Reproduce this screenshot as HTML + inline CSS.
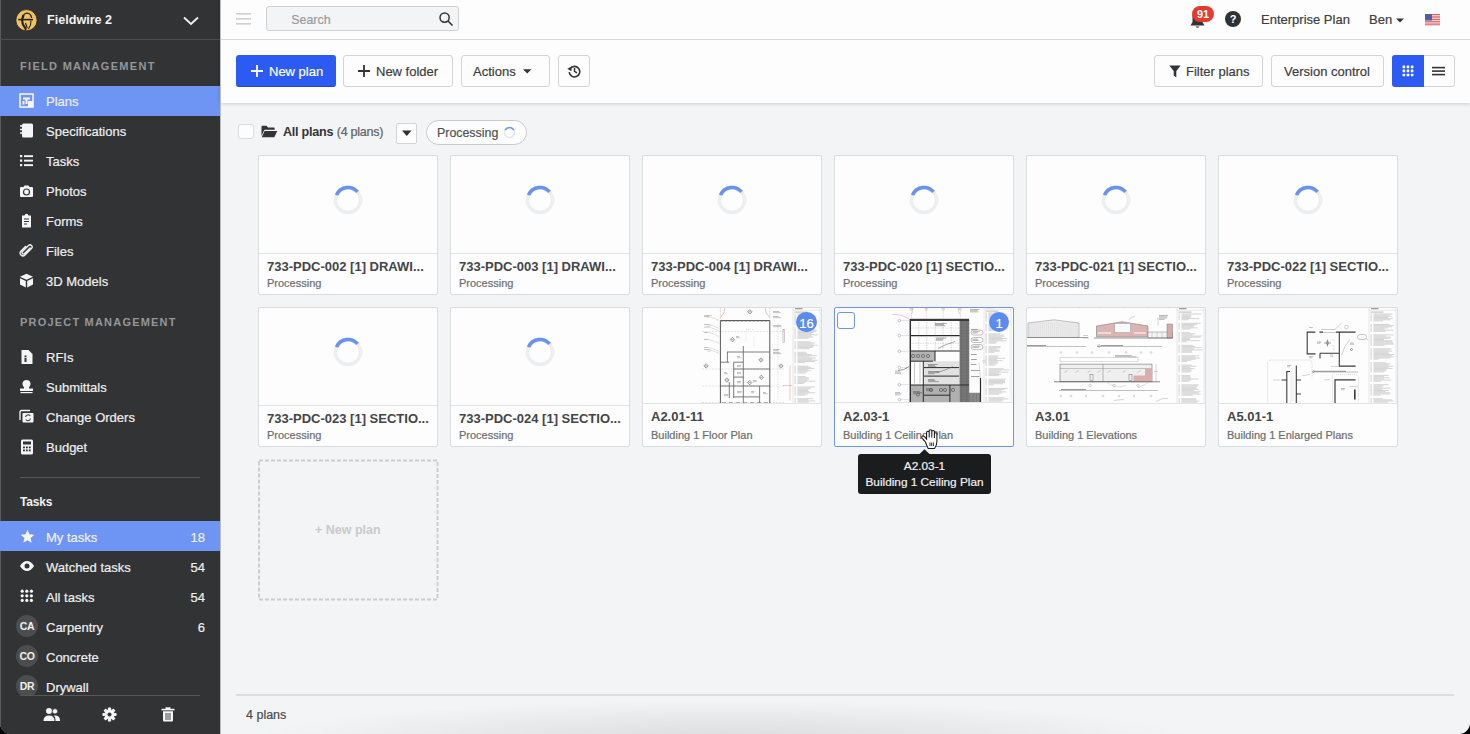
<!DOCTYPE html><html><head><meta charset="utf-8"><style>
*{box-sizing:border-box;margin:0;padding:0}
html,body{width:1470px;height:734px;overflow:hidden;background:#000}
body{font-family:"Liberation Sans",sans-serif;position:relative}
.win .a{-webkit-text-stroke:0.2px currentColor}
.win .a[style*="font-weight:bold"],.win b{-webkit-text-stroke:0}
.win{position:absolute;left:0;top:0;width:1470px;height:734px;overflow:hidden;border-radius:0 0 11px 11px;background:#f3f4f6}
.a{position:absolute;white-space:nowrap}
.sb{position:absolute;left:0;top:0;width:220px;height:734px;background:#323335}
.sbt{position:absolute;left:46px;font-size:13px;color:#ecedee;line-height:16px}
.sec{position:absolute;left:20px;font-size:11px;letter-spacing:2.05px;color:#9b9da1;font-weight:bold;line-height:14px}
.hl{position:absolute;left:0;width:220px;height:30px;background:#6e95f4}
.ic{position:absolute}
.btn{position:absolute;top:55px;height:32px;border:1px solid #d3d4d6;border-radius:3px;background:#fdfdfd}
.bt{position:absolute;font-size:13px;color:#3d3e40;line-height:16px;white-space:nowrap}
.card{position:absolute;width:180px;height:140px;background:#fdfdfd;border:1px solid #dadcdf;border-radius:2px;overflow:hidden}
.card .img{position:absolute;left:0;top:0;width:178px;height:98px;border-bottom:1px solid #e2e3e5;overflow:hidden}
.card .t{position:absolute;left:8px;top:100px;font-size:13px;font-weight:bold;color:#3a3b3d;line-height:16px;white-space:nowrap}
.card .s{position:absolute;left:8px;top:118px;font-size:11px;color:#6b6c6e;line-height:14px;white-space:nowrap}
</style></head><body><div class="win"><div class="sb"><div class="a" style="left:0;top:0;width:1px;height:734px;background:#5a5b5d"></div><svg class="a" style="left:15px;top:9px;" width="23" height="23" viewBox="0 0 23 23"><circle cx="11.5" cy="11.2" r="10.6" fill="#efc25f" stroke="#1f1d19" stroke-width="0.7"/><path d="M8 9 Q8.3 4.3 12 4.2 Q15.8 4.3 16.6 9" fill="none" stroke="#26231e" stroke-width="1.3"/><path d="M3.2 10.6 H18" stroke="#26231e" stroke-width="1.6"/><path d="M8.6 6 Q6.2 11 8 15.5 L11.2 20.8" fill="none" stroke="#26231e" stroke-width="2.2"/><path d="M16 11.5 Q16.2 16 13.5 20" fill="none" stroke="#26231e" stroke-width="1.1"/><path d="M10.5 14 L12.3 19" stroke="#26231e" stroke-width="1.2"/></svg><div class="a" style="left:47.00px;top:12.13px;font-size:12.6px;line-height:16px;font-weight:bold;color:#f2f2f3;">Fieldwire 2</div><svg class="a" style="left:183px;top:16px;" width="16" height="10" viewBox="0 0 16 10"><path d="M1 1.5 L8 8 L15 1.5" stroke="#f2f2f3" stroke-width="1.8" fill="none"/></svg><div class="a" style="left:0;top:39px;width:220px;height:1px;background:#4b4d50"></div><div class="a" style="left:20.00px;top:58.79px;font-size:11px;line-height:14px;font-weight:bold;color:#94969a;letter-spacing:1.3px;">FIELD MANAGEMENT</div><div class="hl" style="top:86px"></div><div class="a" style="left:46.00px;top:93.90px;font-size:13px;line-height:16px;font-weight:normal;color:#eeeff0;">Plans</div><div class="a" style="left:46.00px;top:123.90px;font-size:13px;line-height:16px;font-weight:normal;color:#eeeff0;">Specifications</div><div class="a" style="left:46.00px;top:153.90px;font-size:13px;line-height:16px;font-weight:normal;color:#eeeff0;">Tasks</div><div class="a" style="left:46.00px;top:183.90px;font-size:13px;line-height:16px;font-weight:normal;color:#eeeff0;">Photos</div><div class="a" style="left:46.00px;top:213.90px;font-size:13px;line-height:16px;font-weight:normal;color:#eeeff0;">Forms</div><div class="a" style="left:46.00px;top:243.90px;font-size:13px;line-height:16px;font-weight:normal;color:#eeeff0;">Files</div><div class="a" style="left:46.00px;top:273.90px;font-size:13px;line-height:16px;font-weight:normal;color:#eeeff0;">3D Models</div><div class="a" style="left:20.00px;top:314.79px;font-size:11px;line-height:14px;font-weight:bold;color:#94969a;letter-spacing:1.2px;">PROJECT MANAGEMENT</div><div class="a" style="left:46.00px;top:349.90px;font-size:13px;line-height:16px;font-weight:normal;color:#eeeff0;">RFIs</div><div class="a" style="left:46.00px;top:379.90px;font-size:13px;line-height:16px;font-weight:normal;color:#eeeff0;">Submittals</div><div class="a" style="left:46.00px;top:409.90px;font-size:13px;line-height:16px;font-weight:normal;color:#eeeff0;">Change Orders</div><div class="a" style="left:46.00px;top:439.90px;font-size:13px;line-height:16px;font-weight:normal;color:#eeeff0;">Budget</div><div class="a" style="left:20px;top:477px;width:180px;height:1px;background:#55575a"></div><div class="a" style="left:20.00px;top:495.24px;font-size:12px;line-height:15px;font-weight:bold;color:#f2f2f3;letter-spacing:-0.2px;">Tasks</div><div class="hl" style="top:521px"></div><div class="a" style="left:46.00px;top:529.70px;font-size:13px;line-height:16px;font-weight:normal;color:#eeeff0;">My tasks</div><div class="a" style="left:150px;width:55px;text-align:right;top:529.70px;font-size:13px;line-height:16px;color:#eeeff0">18</div><div class="a" style="left:46.00px;top:559.70px;font-size:13px;line-height:16px;font-weight:normal;color:#eeeff0;">Watched tasks</div><div class="a" style="left:150px;width:55px;text-align:right;top:559.70px;font-size:13px;line-height:16px;color:#eeeff0">54</div><div class="a" style="left:46.00px;top:589.70px;font-size:13px;line-height:16px;font-weight:normal;color:#eeeff0;">All tasks</div><div class="a" style="left:150px;width:55px;text-align:right;top:589.70px;font-size:13px;line-height:16px;color:#eeeff0">54</div><div class="a" style="left:46.00px;top:619.70px;font-size:13px;line-height:16px;font-weight:normal;color:#eeeff0;">Carpentry</div><div class="a" style="left:150px;width:55px;text-align:right;top:619.70px;font-size:13px;line-height:16px;color:#eeeff0">6</div><div class="a" style="left:46.00px;top:649.70px;font-size:13px;line-height:16px;font-weight:normal;color:#eeeff0;">Concrete</div><div class="a" style="left:46.00px;top:679.70px;font-size:13px;line-height:16px;font-weight:normal;color:#eeeff0;">Drywall</div><div class="a" style="left:16px;top:615px;width:22px;height:22px;border-radius:11px;background:#4b4d4f;color:#f0f0f0;font-size:10.5px;font-weight:bold;line-height:22px;text-align:center;letter-spacing:-0.3px">CA</div><div class="a" style="left:16px;top:645px;width:22px;height:22px;border-radius:11px;background:#4b4d4f;color:#f0f0f0;font-size:10.5px;font-weight:bold;line-height:22px;text-align:center;letter-spacing:-0.3px">CO</div><div class="a" style="left:16px;top:675px;width:22px;height:22px;border-radius:11px;background:#4b4d4f;color:#f0f0f0;font-size:10.5px;font-weight:bold;line-height:22px;text-align:center;letter-spacing:-0.3px">DR</div><div class="a" style="left:1px;top:696px;width:219px;height:40px;background:#323335"></div><div class="a" style="left:20px;top:695px;width:180px;height:1px;background:#55575a"></div><svg class="a" style="left:19px;top:93px;" width="15" height="15" viewBox="0 0 15 15"><rect x="1" y="1" width="13" height="13" fill="none" stroke="#f4f5f6" stroke-width="1.6"/><path d="M4 4.5 H11 V6.5 H8.5 V11 H6.5 V6.5 H4 Z" fill="#f4f5f6"/><rect x="9" y="8" width="5" height="6" fill="#f4f5f6"/><rect x="3.5" y="8" width="2" height="3.5" fill="#f4f5f6"/></svg><svg class="a" style="left:19px;top:123px;" width="15" height="15" viewBox="0 0 15 15"><rect x="3" y="0.5" width="11" height="14" rx="1.5" fill="#f4f5f6"/><path d="M1 3 H4 M1 6.5 H4 M1 10 H4" stroke="#f4f5f6" stroke-width="1.3"/></svg><svg class="a" style="left:19px;top:154px;" width="15" height="13" viewBox="0 0 15 13"><rect x="1" y="1" width="2.2" height="2.2" fill="#f4f5f6"/><rect x="1" y="5.5" width="2.2" height="2.2" fill="#f4f5f6"/><rect x="1" y="10" width="2.2" height="2.2" fill="#f4f5f6"/><rect x="5" y="1.2" width="9" height="1.9" fill="#f4f5f6"/><rect x="5" y="5.7" width="9" height="1.9" fill="#f4f5f6"/><rect x="5" y="10.2" width="9" height="1.9" fill="#f4f5f6"/></svg><svg class="a" style="left:19px;top:184px;" width="15" height="14" viewBox="0 0 15 14"><path d="M1 4 Q1 3 2 3 H4.5 L5.5 1.5 H9.5 L10.5 3 H13 Q14 3 14 4 V12 Q14 13 13 13 H2 Q1 13 1 12 Z" fill="#f4f5f6"/><circle cx="7.5" cy="8" r="3" fill="none" stroke="#323335" stroke-width="1.2"/></svg><svg class="a" style="left:19px;top:213px;" width="15" height="15" viewBox="0 0 15 15"><path d="M3 2.5 H5.5 Q6 0.8 7.5 0.8 Q9 0.8 9.5 2.5 H12 V14.5 H3 Z" fill="#f4f5f6"/><path d="M5 6 H10 M5 8.5 H10 M5 11 H8" stroke="#323335" stroke-width="1"/></svg><svg class="a" style="left:19px;top:243px;" width="15" height="15" viewBox="0 0 15 15"><path d="M11.5 4.5 L5.5 10.5 Q4.5 11.5 3.5 10.5 Q2.5 9.5 3.5 8.5 L9.5 2.5 Q11 1 12.5 2.5 Q14 4 12.5 5.5 L6 12 Q4 14 2 12 Q0 10 2 8 L7 3" fill="none" stroke="#f4f5f6" stroke-width="1.3"/></svg><svg class="a" style="left:19px;top:273px;" width="15" height="15" viewBox="0 0 15 15"><path d="M7.5 0.8 L14 3.8 L7.5 6.8 L1 3.8 Z" fill="#f4f5f6"/><path d="M1 5.2 L6.8 8 V14.5 L1 11.6 Z" fill="#f4f5f6"/><path d="M14 5.2 L8.2 8 V14.5 L14 11.6 Z" fill="#f4f5f6"/></svg><svg class="a" style="left:20px;top:349px;" width="14" height="16" viewBox="0 0 14 16"><path d="M1.5 1 H8.5 L12.5 5 V14.5 Q12.5 15 12 15 H2 Q1.5 15 1.5 14.5 Z" fill="#f4f5f6"/><rect x="4.5" y="6.5" width="2" height="1.8" fill="#323335"/><rect x="4.5" y="9" width="2" height="4" fill="#323335"/></svg><svg class="a" style="left:19px;top:379px;" width="15" height="15" viewBox="0 0 15 15"><path d="M5 8.5 Q3 6.5 3.5 4.2 Q4.2 1 7.5 1 Q10.8 1 11.5 4.2 Q12 6.5 10 8.5 V9.5 H14 V12 H1 V9.5 H5 Z" fill="#f4f5f6"/><rect x="1.5" y="13" width="12" height="1.2" fill="#f4f5f6"/></svg><svg class="a" style="left:19px;top:409px;" width="15" height="15" viewBox="0 0 15 15"><path d="M1 11 V3 Q1 1.5 2.5 1.5 H11" fill="none" stroke="#f4f5f6" stroke-width="1.3"/><rect x="3.5" y="4" width="11" height="9.5" rx="1" fill="#f4f5f6"/><path d="M6.5 8 Q7 5.8 9 5.8 Q10.5 5.8 11.2 7 M11.5 9.5 Q11 11.7 9 11.7 Q7.5 11.7 6.8 10.5" fill="none" stroke="#323335" stroke-width="1.1"/></svg><svg class="a" style="left:20px;top:439px;" width="14" height="16" viewBox="0 0 14 16"><rect x="1" y="0.5" width="12" height="15" rx="1.5" fill="#f4f5f6"/><rect x="3" y="2.5" width="8" height="3" fill="#323335"/><rect x="3.0" y="7.5" width="1.9" height="1.8" fill="#323335"/><rect x="3.0" y="10.5" width="1.9" height="1.8" fill="#323335"/><rect x="5.9" y="7.5" width="1.9" height="1.8" fill="#323335"/><rect x="5.9" y="10.5" width="1.9" height="1.8" fill="#323335"/><rect x="8.8" y="7.5" width="1.9" height="1.8" fill="#323335"/><rect x="8.8" y="10.5" width="1.9" height="1.8" fill="#323335"/></svg><svg class="a" style="left:20px;top:529px;" width="15" height="15" viewBox="0 0 15 15"><path d="M7.5 0.8 L9.4 5.3 L14.3 5.7 L10.6 8.9 L11.7 13.7 L7.5 11.2 L3.3 13.7 L4.4 8.9 L0.7 5.7 L5.6 5.3 Z" fill="#f4f5f6"/></svg><svg class="a" style="left:19px;top:560px;" width="16" height="12" viewBox="0 0 16 12"><path d="M1 6 Q4 1 8 1 Q12 1 15 6 Q12 11 8 11 Q4 11 1 6 Z" fill="#f4f5f6"/><circle cx="8" cy="6" r="2.5" fill="#323335"/></svg><svg class="a" style="left:20px;top:589px;" width="14" height="14" viewBox="0 0 14 14"><circle cx="2.2" cy="2.2" r="1.6" fill="#f4f5f6"/><circle cx="2.2" cy="6.8" r="1.6" fill="#f4f5f6"/><circle cx="2.2" cy="11.4" r="1.6" fill="#f4f5f6"/><circle cx="6.8" cy="2.2" r="1.6" fill="#f4f5f6"/><circle cx="6.8" cy="6.8" r="1.6" fill="#f4f5f6"/><circle cx="6.8" cy="11.4" r="1.6" fill="#f4f5f6"/><circle cx="11.4" cy="2.2" r="1.6" fill="#f4f5f6"/><circle cx="11.4" cy="6.8" r="1.6" fill="#f4f5f6"/><circle cx="11.4" cy="11.4" r="1.6" fill="#f4f5f6"/></svg><svg class="a" style="left:43px;top:707px;" width="18" height="15" viewBox="0 0 18 15"><circle cx="6" cy="4" r="3" fill="#f4f5f6"/><path d="M0.5 14 Q0.5 8.5 6 8.5 Q11.5 8.5 11.5 14 Z" fill="#f4f5f6"/><circle cx="12" cy="4.3" r="2.7" fill="#f4f5f6" stroke="#323335" stroke-width="0.8"/><path d="M12.5 14 V13 Q12.5 9.5 10.5 8.6 Q11.3 8.4 12 8.4 Q17 8.4 17 13.5 V14 Z" fill="#f4f5f6"/></svg><svg class="a" style="left:102px;top:707px;" width="15" height="15" viewBox="0 0 15 15"><g transform="translate(7.5 7.5)"><rect x="-1.6" y="-7" width="3.2" height="4" rx="0.6" fill="#f4f5f6" transform="rotate(0)"/><rect x="-1.6" y="-7" width="3.2" height="4" rx="0.6" fill="#f4f5f6" transform="rotate(45)"/><rect x="-1.6" y="-7" width="3.2" height="4" rx="0.6" fill="#f4f5f6" transform="rotate(90)"/><rect x="-1.6" y="-7" width="3.2" height="4" rx="0.6" fill="#f4f5f6" transform="rotate(135)"/><rect x="-1.6" y="-7" width="3.2" height="4" rx="0.6" fill="#f4f5f6" transform="rotate(180)"/><rect x="-1.6" y="-7" width="3.2" height="4" rx="0.6" fill="#f4f5f6" transform="rotate(225)"/><rect x="-1.6" y="-7" width="3.2" height="4" rx="0.6" fill="#f4f5f6" transform="rotate(270)"/><rect x="-1.6" y="-7" width="3.2" height="4" rx="0.6" fill="#f4f5f6" transform="rotate(315)"/><circle r="5" fill="#f4f5f6"/><circle r="2" fill="#323335"/></g></svg><svg class="a" style="left:161px;top:707px;" width="14" height="15" viewBox="0 0 14 15"><rect x="0.5" y="1.8" width="13" height="1.6" fill="#f4f5f6"/><rect x="4.5" y="0.3" width="5" height="2" fill="#f4f5f6"/><path d="M2 4.3 H12 V13.5 Q12 14.5 11 14.5 H3 Q2 14.5 2 13.5 Z" fill="#f4f5f6"/><path d="M5 6 V13 M7 6 V13 M9 6 V13" stroke="#323335" stroke-width="0.9"/></svg></div><div class="a" style="left:220px;top:0;width:1250px;height:103px;background:#fdfdfd;box-shadow:0 1px 4px rgba(0,0,0,0.16)"></div><div class="a" style="left:220px;top:0;width:1px;height:734px;background:#bdbec0"></div><div class="a" style="left:221px;top:39px;width:1249px;height:1px;background:#d6d7d9"></div><svg class="a" style="left:236px;top:12px;" width="15" height="13" viewBox="0 0 15 13"><rect x="0" y="1" width="15" height="1.6" fill="#cfd0d2"/><rect x="0" y="6" width="15" height="1.6" fill="#cfd0d2"/><rect x="0" y="11" width="15" height="1.6" fill="#cfd0d2"/></svg><div class="a" style="left:266px;top:6px;width:193px;height:25px;background:#f3f4f6;border:1px solid #cfd0d2;border-radius:3px"></div><div class="a" style="left:291.30px;top:11.90px;font-size:12.4px;line-height:16px;font-weight:normal;color:#9a9b9d;">Search</div><svg class="a" style="left:438px;top:11px;" width="16" height="16" viewBox="0 0 16 16"><circle cx="6.6" cy="6.6" r="4.6" fill="none" stroke="#333436" stroke-width="1.5"/><path d="M10 10 L14.5 14.5" stroke="#333436" stroke-width="1.6"/></svg><svg class="a" style="left:1189px;top:8px;" width="17" height="22" viewBox="0 0 17 22"><path d="M8.5 3 Q3.5 3 3.5 9 V14 L1.5 17.5 H15.5 L13.5 14 V9 Q13.5 3 8.5 3 Z" fill="#333436"/><path d="M6.5 18.5 Q8.5 21 10.5 18.5 Z" fill="#333436"/></svg><div class="a" style="left:1192px;top:5.5px;width:22px;height:16px;border-radius:8px;background:#e53a2f;color:#fff;font-size:11px;font-weight:bold;line-height:16px;text-align:center">91</div><div class="a" style="left:1225px;top:11px;width:16px;height:16px;border-radius:8px;background:#2f3133;color:#fff;font-size:11px;font-weight:bold;line-height:16px;text-align:center">?</div><div class="a" style="left:1261.00px;top:12.40px;font-size:13px;line-height:16px;font-weight:normal;color:#3d3e40;">Enterprise Plan</div><div class="a" style="left:1369.00px;top:12.00px;font-size:13px;line-height:16px;font-weight:normal;color:#3d3e40;">Ben</div><svg class="a" style="left:1396px;top:18px;" width="8" height="5" viewBox="0 0 8 5"><path d="M0 0.5 H8 L4 4.5 Z" fill="#333436"/></svg><svg class="a" style="left:1425px;top:14px;" width="15" height="12" viewBox="0 0 15 12"><rect x="0" y="0" width="15" height="12" fill="#f5f5f5"/><rect x="0" y="0.00" width="15" height="0.9" fill="#d9524f"/><rect x="0" y="1.72" width="15" height="0.9" fill="#d9524f"/><rect x="0" y="3.44" width="15" height="0.9" fill="#d9524f"/><rect x="0" y="5.16" width="15" height="0.9" fill="#d9524f"/><rect x="0" y="6.88" width="15" height="0.9" fill="#d9524f"/><rect x="0" y="8.60" width="15" height="0.9" fill="#d9524f"/><rect x="0" y="10.32" width="15" height="0.9" fill="#d9524f"/><rect x="0" y="0" width="7" height="6.5" fill="#4a5fa8"/></svg><div class="a" style="left:236px;top:55px;width:100px;height:32px;background:#2c5bf4;border-radius:3px;border-bottom:1px solid #2a48b0"></div><svg class="a" style="left:251px;top:65px;" width="12" height="12" viewBox="0 0 12 12"><path d="M6 0 V12 M0 6 H12" stroke="#fff" stroke-width="1.8"/></svg><div class="a" style="left:269.00px;top:63.50px;font-size:13px;line-height:16px;font-weight:normal;color:#ffffff;">New plan</div><div class="btn" style="left:343px;width:110px"></div><svg class="a" style="left:358px;top:65px;" width="12" height="12" viewBox="0 0 12 12"><path d="M6 0 V12 M0 6 H12" stroke="#333436" stroke-width="1.8"/></svg><div class="a" style="left:376.00px;top:63.50px;font-size:13px;line-height:16px;font-weight:normal;color:#3d3e40;">New folder</div><div class="btn" style="left:461px;width:89px"></div><div class="a" style="left:473.00px;top:63.50px;font-size:13px;line-height:16px;font-weight:normal;color:#3d3e40;">Actions</div><svg class="a" style="left:523px;top:69px;" width="9" height="5" viewBox="0 0 9 5"><path d="M0 0.3 H8.5 L4.25 4.5 Z" fill="#333436"/></svg><div class="btn" style="left:558px;width:32px"></div><svg class="a" style="left:567px;top:64px;" width="14" height="14" viewBox="0 0 14 14"><path d="M3.2 4.5 A5.3 5.3 0 1 1 2.2 8.2" fill="none" stroke="#333436" stroke-width="1.6"/><path d="M0.3 4.8 L4.6 2.6 L4.5 7.2 Z" fill="#333436"/><path d="M7.5 4 V7.3 L10 9" fill="none" stroke="#333436" stroke-width="1.5"/></svg><div class="btn" style="left:1154px;width:109px"></div><svg class="a" style="left:1169px;top:65px;" width="12" height="13" viewBox="0 0 12 13"><path d="M0.3 0.5 H11.7 L7.3 6 V12.5 L4.7 10.5 V6 Z" fill="#333436"/></svg><div class="a" style="left:1186.00px;top:63.50px;font-size:13px;line-height:16px;font-weight:normal;color:#3d3e40;">Filter plans</div><div class="btn" style="left:1271px;width:113px"></div><div class="a" style="left:1284.00px;top:63.50px;font-size:13px;line-height:16px;font-weight:normal;color:#3d3e40;">Version control</div><div class="btn" style="left:1392px;width:63px"></div><div class="a" style="left:1392px;top:55px;width:32px;height:32px;background:#2c5bf4;border-radius:3px 0 0 3px"></div><svg class="a" style="left:1402px;top:65px;" width="12" height="12" viewBox="0 0 12 12"><rect x="0.6" y="0.6" width="2.6" height="2.6" rx="0.5" fill="#fff"/><rect x="0.6" y="4.6" width="2.6" height="2.6" rx="0.5" fill="#fff"/><rect x="0.6" y="8.7" width="2.6" height="2.6" rx="0.5" fill="#fff"/><rect x="4.7" y="0.6" width="2.6" height="2.6" rx="0.5" fill="#fff"/><rect x="4.7" y="4.6" width="2.6" height="2.6" rx="0.5" fill="#fff"/><rect x="4.7" y="8.7" width="2.6" height="2.6" rx="0.5" fill="#fff"/><rect x="8.8" y="0.6" width="2.6" height="2.6" rx="0.5" fill="#fff"/><rect x="8.8" y="4.6" width="2.6" height="2.6" rx="0.5" fill="#fff"/><rect x="8.8" y="8.7" width="2.6" height="2.6" rx="0.5" fill="#fff"/></svg><svg class="a" style="left:1432px;top:66px;" width="14" height="10" viewBox="0 0 14 10"><rect x="0" y="0.8" width="13" height="1.6" fill="#333436"/><rect x="0" y="4.3" width="13" height="1.6" fill="#333436"/><rect x="0" y="7.8" width="13" height="1.6" fill="#333436"/></svg><div class="a" style="left:238px;top:124px;width:16px;height:15px;background:#fdfdfd;border:1px solid #dcdde0;border-radius:3px"></div><svg class="a" style="left:261px;top:125px;" width="17" height="13" viewBox="0 0 17 13"><path d="M0.5 1.5 Q0.5 0.8 1.2 0.8 H5.5 L7 2.5 H13 Q13.7 2.5 13.7 3.2 V4.8 H4 Q3.3 4.8 3 5.5 L0.5 11 Z" fill="#333436"/><path d="M3.6 6 H16.3 L13.3 12.2 H0.8 Z" fill="#333436"/></svg><div class="a" style="left:283.00px;top:124.43px;font-size:12.6px;line-height:16px;font-weight:normal;color:#333436;"><b style="letter-spacing:-0.25px">All plans</b> <span style="color:#616264;letter-spacing:-0.3px">(4 plans)</span></div><div class="a" style="left:396px;top:122.5px;width:21px;height:21px;background:#fdfdfd;border:1px solid #d3d4d6;border-radius:2px"></div><svg class="a" style="left:402px;top:130px;" width="10" height="7" viewBox="0 0 10 7"><path d="M0 0.5 H9.5 L4.75 6 Z" fill="#2f3033"/></svg><div class="a" style="left:426px;top:120px;width:101px;height:24.5px;background:#fdfdfd;border:1px solid #c9cacc;border-radius:13px"></div><div class="a" style="left:437.00px;top:124.60px;font-size:12.4px;line-height:16px;font-weight:normal;color:#505153;">Processing</div><svg class="a" style="left:503px;top:126px;" width="13" height="13" viewBox="0 0 13 13"><circle cx="6.5" cy="6.5" r="5" fill="none" stroke="#e6e7e9" stroke-width="1.6"/><path d="M2.2 4 A5 5 0 0 1 10.8 4" fill="none" stroke="#6d94f1" stroke-width="1.6"/></svg><div class="card" style="left:258px;top:155px"><div class="img"></div></div><svg class="a" style="left:333px;top:185px;" width="30" height="30" viewBox="0 0 30 30"><circle cx="15" cy="15" r="12.5" fill="none" stroke="#edeef0" stroke-width="3.6"/><path d="M3.49 10.12 A12.5 12.5 0 0 1 24.58 6.96" fill="none" stroke="#6a93f0" stroke-width="3.6"/></svg><div class="a" style="left:267.00px;top:258.70px;font-size:13px;line-height:16px;font-weight:bold;color:#444547;">733-PDC-002 [1] DRAWI...</div><div class="a" style="left:267.00px;top:275.69px;font-size:11px;line-height:14px;font-weight:normal;color:#6b6c6e;">Processing</div><div class="card" style="left:450px;top:155px"><div class="img"></div></div><svg class="a" style="left:525px;top:185px;" width="30" height="30" viewBox="0 0 30 30"><circle cx="15" cy="15" r="12.5" fill="none" stroke="#edeef0" stroke-width="3.6"/><path d="M3.49 10.12 A12.5 12.5 0 0 1 24.58 6.96" fill="none" stroke="#6a93f0" stroke-width="3.6"/></svg><div class="a" style="left:459.00px;top:258.70px;font-size:13px;line-height:16px;font-weight:bold;color:#444547;">733-PDC-003 [1] DRAWI...</div><div class="a" style="left:459.00px;top:275.69px;font-size:11px;line-height:14px;font-weight:normal;color:#6b6c6e;">Processing</div><div class="card" style="left:642px;top:155px"><div class="img"></div></div><svg class="a" style="left:717px;top:185px;" width="30" height="30" viewBox="0 0 30 30"><circle cx="15" cy="15" r="12.5" fill="none" stroke="#edeef0" stroke-width="3.6"/><path d="M3.49 10.12 A12.5 12.5 0 0 1 24.58 6.96" fill="none" stroke="#6a93f0" stroke-width="3.6"/></svg><div class="a" style="left:651.00px;top:258.70px;font-size:13px;line-height:16px;font-weight:bold;color:#444547;">733-PDC-004 [1] DRAWI...</div><div class="a" style="left:651.00px;top:275.69px;font-size:11px;line-height:14px;font-weight:normal;color:#6b6c6e;">Processing</div><div class="card" style="left:834px;top:155px"><div class="img"></div></div><svg class="a" style="left:909px;top:185px;" width="30" height="30" viewBox="0 0 30 30"><circle cx="15" cy="15" r="12.5" fill="none" stroke="#edeef0" stroke-width="3.6"/><path d="M3.49 10.12 A12.5 12.5 0 0 1 24.58 6.96" fill="none" stroke="#6a93f0" stroke-width="3.6"/></svg><div class="a" style="left:843.00px;top:258.70px;font-size:13px;line-height:16px;font-weight:bold;color:#444547;">733-PDC-020 [1] SECTIO...</div><div class="a" style="left:843.00px;top:275.69px;font-size:11px;line-height:14px;font-weight:normal;color:#6b6c6e;">Processing</div><div class="card" style="left:1026px;top:155px"><div class="img"></div></div><svg class="a" style="left:1101px;top:185px;" width="30" height="30" viewBox="0 0 30 30"><circle cx="15" cy="15" r="12.5" fill="none" stroke="#edeef0" stroke-width="3.6"/><path d="M3.49 10.12 A12.5 12.5 0 0 1 24.58 6.96" fill="none" stroke="#6a93f0" stroke-width="3.6"/></svg><div class="a" style="left:1035.00px;top:258.70px;font-size:13px;line-height:16px;font-weight:bold;color:#444547;">733-PDC-021 [1] SECTIO...</div><div class="a" style="left:1035.00px;top:275.69px;font-size:11px;line-height:14px;font-weight:normal;color:#6b6c6e;">Processing</div><div class="card" style="left:1218px;top:155px"><div class="img"></div></div><svg class="a" style="left:1293px;top:185px;" width="30" height="30" viewBox="0 0 30 30"><circle cx="15" cy="15" r="12.5" fill="none" stroke="#edeef0" stroke-width="3.6"/><path d="M3.49 10.12 A12.5 12.5 0 0 1 24.58 6.96" fill="none" stroke="#6a93f0" stroke-width="3.6"/></svg><div class="a" style="left:1227.00px;top:258.70px;font-size:13px;line-height:16px;font-weight:bold;color:#444547;">733-PDC-022 [1] SECTIO...</div><div class="a" style="left:1227.00px;top:275.69px;font-size:11px;line-height:14px;font-weight:normal;color:#6b6c6e;">Processing</div><div class="card" style="left:258px;top:307px;"><div class="img" style="height:98px;"></div></div><svg class="a" style="left:333px;top:337px;" width="30" height="30" viewBox="0 0 30 30"><circle cx="15" cy="15" r="12.5" fill="none" stroke="#edeef0" stroke-width="3.6"/><path d="M3.49 10.12 A12.5 12.5 0 0 1 24.58 6.96" fill="none" stroke="#6a93f0" stroke-width="3.6"/></svg><div class="a" style="left:267.00px;top:410.80px;font-size:13px;line-height:16px;font-weight:bold;color:#444547;">733-PDC-023 [1] SECTIO...</div><div class="a" style="left:267.00px;top:427.59px;font-size:11px;line-height:14px;font-weight:normal;color:#6b6c6e;">Processing</div><div class="card" style="left:450px;top:307px;"><div class="img" style="height:98px;"></div></div><svg class="a" style="left:525px;top:337px;" width="30" height="30" viewBox="0 0 30 30"><circle cx="15" cy="15" r="12.5" fill="none" stroke="#edeef0" stroke-width="3.6"/><path d="M3.49 10.12 A12.5 12.5 0 0 1 24.58 6.96" fill="none" stroke="#6a93f0" stroke-width="3.6"/></svg><div class="a" style="left:459.00px;top:410.80px;font-size:13px;line-height:16px;font-weight:bold;color:#444547;">733-PDC-024 [1] SECTIO...</div><div class="a" style="left:459.00px;top:427.59px;font-size:11px;line-height:14px;font-weight:normal;color:#6b6c6e;">Processing</div><div class="card" style="left:642px;top:307px;"><div class="img" style="height:96px;"><svg width="178" height="96" viewBox="0 0 178 96" style="position:absolute;left:0;top:0"><g transform="translate(-1 -2.5)"><line x1="78.4" y1="2" x2="78.4" y2="14" stroke="#d88" stroke-width="0.4" stroke-dasharray="2 1"/><line x1="127.8" y1="2" x2="127.8" y2="14" stroke="#d88" stroke-width="0.4" stroke-dasharray="2 1"/><line x1="60" y1="26" x2="142" y2="26" stroke="#b8b8c0" stroke-width="0.35" stroke-dasharray="2 1.2"/><line x1="60" y1="63.5" x2="142" y2="63.5" stroke="#b8b8c0" stroke-width="0.35" stroke-dasharray="2 1.2"/><line x1="60" y1="80.5" x2="142" y2="80.5" stroke="#b8b8c0" stroke-width="0.35" stroke-dasharray="2 1.2"/><line x1="60" y1="97" x2="142" y2="97" stroke="#b8b8c0" stroke-width="0.35" stroke-dasharray="2 1.2"/><path d="M83 2 Q83 8 78.4 12 M123 2 Q123 8 127.8 12" fill="none" stroke="#999" stroke-width="0.5"/><path d="M78.4 98 V15 H127.8 V98" fill="none" stroke="#585858" stroke-width="1.0"/><line x1="78.4" y1="15.6" x2="127.8" y2="15.6" stroke="#777" stroke-width="0.8" stroke-dasharray="3 1"/><path d="M85 46.5 H127.8 M85.4 46.5 V56.7 M101.3 40.5 V98 M78.4 56.7 H87.3 M91.7 56.7 H101.3 M91.7 56.7 V92.5 M87.3 76.5 V92.5 M91.7 63.5 H127.8 M91.7 71.6 H101.3 M78.4 80.5 H127.8 M91.7 91.4 H117.6 M117.6 80.5 V98" fill="none" stroke="#5e5e5e" stroke-width="0.8"/><path d="M80 97.5 H127" stroke="#666" stroke-width="0.9" stroke-dasharray="4 3"/><path d="M104 36 V24 H112 M112 40 V30" fill="none" stroke="#bbb" stroke-width="0.4" stroke-dasharray="1 1"/><path d="M90.4 31.900000000000002 L92.60000000000001 34.1 L90.4 36.300000000000004 L88.2 34.1 Z" fill="none" stroke="#555" stroke-width="0.6"/><line x1="89.2" y1="34.1" x2="91.60000000000001" y2="34.1" stroke="#555" stroke-width="0.5"/><path d="M107.8 4.1 L110.0 6.3 L107.8 8.5 L105.6 6.3 Z" fill="none" stroke="#555" stroke-width="0.6"/><line x1="106.6" y1="6.3" x2="109.0" y2="6.3" stroke="#555" stroke-width="0.5"/><path d="M64.1 58.199999999999996 L66.3 60.4 L64.1 62.6 L61.89999999999999 60.4 Z" fill="none" stroke="#555" stroke-width="0.6"/><line x1="62.89999999999999" y1="60.4" x2="65.3" y2="60.4" stroke="#555" stroke-width="0.5"/><path d="M84.9 72.3 L87.10000000000001 74.5 L84.9 76.7 L82.7 74.5 Z" fill="none" stroke="#555" stroke-width="0.6"/><line x1="83.7" y1="74.5" x2="86.10000000000001" y2="74.5" stroke="#555" stroke-width="0.5"/><path d="M107.7 74.89999999999999 L109.9 77.1 L107.7 79.3 L105.5 77.1 Z" fill="none" stroke="#555" stroke-width="0.6"/><line x1="106.5" y1="77.1" x2="108.9" y2="77.1" stroke="#555" stroke-width="0.5"/><path d="M119.3 69.7 L121.5 71.9 L119.3 74.10000000000001 L117.1 71.9 Z" fill="none" stroke="#555" stroke-width="0.6"/><line x1="118.1" y1="71.9" x2="120.5" y2="71.9" stroke="#555" stroke-width="0.5"/><path d="M119 52.3 L121.2 54.5 L119 56.7 L116.8 54.5 Z" fill="none" stroke="#555" stroke-width="0.6"/><line x1="117.8" y1="54.5" x2="120.2" y2="54.5" stroke="#555" stroke-width="0.5"/><path d="M139 58.3 L141.2 60.5 L139 62.7 L136.8 60.5 Z" fill="none" stroke="#555" stroke-width="0.6"/><line x1="137.8" y1="60.5" x2="140.2" y2="60.5" stroke="#555" stroke-width="0.5"/><line x1="94" y1="31.00" x2="96.87" y2="31.00" stroke="#888" stroke-width="0.5"/><line x1="94" y1="32.20" x2="98.04" y2="32.20" stroke="#888" stroke-width="0.5"/><line x1="95" y1="51.00" x2="97.92" y2="51.00" stroke="#888" stroke-width="0.5"/><line x1="95" y1="52.20" x2="99.28" y2="52.20" stroke="#888" stroke-width="0.5"/><line x1="95" y1="60.00" x2="99.02" y2="60.00" stroke="#888" stroke-width="0.5"/><line x1="95" y1="61.20" x2="98.46" y2="61.20" stroke="#888" stroke-width="0.5"/><line x1="95" y1="67.00" x2="99.04" y2="67.00" stroke="#888" stroke-width="0.5"/><line x1="95" y1="68.20" x2="98.92" y2="68.20" stroke="#888" stroke-width="0.5"/><line x1="82" y1="67.00" x2="84.61" y2="67.00" stroke="#888" stroke-width="0.5"/><line x1="82" y1="68.20" x2="85.83" y2="68.20" stroke="#888" stroke-width="0.5"/><line x1="95" y1="76.00" x2="99.05" y2="76.00" stroke="#888" stroke-width="0.5"/><line x1="95" y1="77.20" x2="98.80" y2="77.20" stroke="#888" stroke-width="0.5"/><line x1="95" y1="86.00" x2="99.70" y2="86.00" stroke="#888" stroke-width="0.5"/><line x1="95" y1="87.20" x2="99.34" y2="87.20" stroke="#888" stroke-width="0.5"/><line x1="109" y1="86.00" x2="112.44" y2="86.00" stroke="#888" stroke-width="0.5"/><line x1="109" y1="87.20" x2="112.07" y2="87.20" stroke="#888" stroke-width="0.5"/><line x1="121" y1="87.00" x2="123.82" y2="87.00" stroke="#888" stroke-width="0.5"/><line x1="121" y1="88.20" x2="125.53" y2="88.20" stroke="#888" stroke-width="0.5"/><line x1="82" y1="89.00" x2="86.22" y2="89.00" stroke="#888" stroke-width="0.5"/><line x1="82" y1="90.20" x2="86.02" y2="90.20" stroke="#888" stroke-width="0.5"/><line x1="111" y1="75.00" x2="114.60" y2="75.00" stroke="#888" stroke-width="0.5"/><line x1="111" y1="76.20" x2="114.75" y2="76.20" stroke="#888" stroke-width="0.5"/><line x1="62" y1="11" x2="66" y2="11" stroke="#888" stroke-width="0.5"/><path d="M66 11 Q72 12 77 15" fill="none" stroke="#aaa" stroke-width="0.35"/><line x1="62" y1="19" x2="66" y2="19" stroke="#888" stroke-width="0.5"/><path d="M66 19 Q72 20 77 23" fill="none" stroke="#aaa" stroke-width="0.35"/><line x1="62" y1="21.5" x2="66" y2="21.5" stroke="#888" stroke-width="0.5"/><path d="M66 21.5 Q72 22.5 77 25.5" fill="none" stroke="#aaa" stroke-width="0.35"/><line x1="62" y1="27" x2="66" y2="27" stroke="#888" stroke-width="0.5"/><path d="M66 27 Q72 28 77 31" fill="none" stroke="#aaa" stroke-width="0.35"/><line x1="62" y1="34" x2="66" y2="34" stroke="#888" stroke-width="0.5"/><path d="M66 34 Q72 35 77 38" fill="none" stroke="#aaa" stroke-width="0.35"/><line x1="62" y1="42" x2="66" y2="42" stroke="#888" stroke-width="0.5"/><path d="M66 42 Q72 43 77 46" fill="none" stroke="#aaa" stroke-width="0.35"/><line x1="62" y1="44" x2="66" y2="44" stroke="#888" stroke-width="0.5"/><path d="M66 44 Q72 45 77 48" fill="none" stroke="#aaa" stroke-width="0.35"/><line x1="62" y1="10" x2="70" y2="10" stroke="#d88" stroke-width="0.5"/><circle cx="66" cy="11" r="1.2" fill="none" stroke="#aaa" stroke-width="0.4"/><circle cx="67" cy="20" r="1.2" fill="none" stroke="#aaa" stroke-width="0.4"/><circle cx="67" cy="45" r="1.2" fill="none" stroke="#aaa" stroke-width="0.4"/><line x1="136" y1="18" x2="136" y2="95" stroke="#bbb" stroke-width="0.4" stroke-dasharray="1.5 1"/><path d="M148 60 V95 M141 80 H150" fill="none" stroke="#d88" stroke-width="0.45"/><rect x="141" y="24" width="1.5" height="13" fill="none" stroke="#999" stroke-width="0.5"/><line x1="131" y1="6.00" x2="137.11" y2="6.00" stroke="#888" stroke-width="0.5"/><line x1="131" y1="7.20" x2="138.65" y2="7.20" stroke="#888" stroke-width="0.5"/><line x1="131" y1="11.00" x2="136.73" y2="11.00" stroke="#888" stroke-width="0.5"/><line x1="131" y1="12.20" x2="139.11" y2="12.20" stroke="#888" stroke-width="0.5"/><line x1="131" y1="20.00" x2="139.15" y2="20.00" stroke="#888" stroke-width="0.5"/><line x1="131" y1="21.20" x2="139.35" y2="21.20" stroke="#888" stroke-width="0.5"/><line x1="131" y1="44.00" x2="137.23" y2="44.00" stroke="#888" stroke-width="0.5"/><line x1="131" y1="45.20" x2="136.46" y2="45.20" stroke="#888" stroke-width="0.5"/><line x1="131" y1="47.00" x2="137.66" y2="47.00" stroke="#888" stroke-width="0.5"/><line x1="131" y1="48.20" x2="139.44" y2="48.20" stroke="#888" stroke-width="0.5"/><line x1="151.0" y1="0" x2="151.0" y2="98" stroke="#d0d0d0" stroke-width="0.5"/><line x1="178.0" y1="0" x2="178.0" y2="98" stroke="#d0d0d0" stroke-width="0.5"/><line x1="153.0" y1="3.2" x2="160.5" y2="3.2" stroke="#666" stroke-width="0.8"/><line x1="151.0" y1="4.8" x2="178.0" y2="4.8" stroke="#ccc" stroke-width="0.4"/><line x1="152.5" y1="6.6" x2="165.5" y2="6.6" stroke="#888" stroke-width="0.55"/><line x1="152.5" y1="8.50" x2="153.8" y2="8.50" stroke="#a4a4a4" stroke-width="0.45"/><line x1="155.5" y1="8.50" x2="169.06" y2="8.50" stroke="#a4a4a4" stroke-width="0.45"/><line x1="152.5" y1="9.65" x2="153.8" y2="9.65" stroke="#a4a4a4" stroke-width="0.45"/><line x1="155.5" y1="9.65" x2="171.34" y2="9.65" stroke="#a4a4a4" stroke-width="0.45"/><line x1="152.5" y1="10.80" x2="153.8" y2="10.80" stroke="#a4a4a4" stroke-width="0.45"/><line x1="155.5" y1="10.80" x2="174.42" y2="10.80" stroke="#a4a4a4" stroke-width="0.45"/><line x1="152.5" y1="11.95" x2="153.8" y2="11.95" stroke="#a4a4a4" stroke-width="0.45"/><line x1="155.5" y1="11.95" x2="165.23" y2="11.95" stroke="#a4a4a4" stroke-width="0.45"/><line x1="152.5" y1="13.10" x2="153.8" y2="13.10" stroke="#a4a4a4" stroke-width="0.45"/><line x1="155.5" y1="13.10" x2="173.96" y2="13.10" stroke="#a4a4a4" stroke-width="0.45"/><line x1="152.5" y1="14.25" x2="153.8" y2="14.25" stroke="#a4a4a4" stroke-width="0.45"/><line x1="155.5" y1="14.25" x2="168.22" y2="14.25" stroke="#a4a4a4" stroke-width="0.45"/><line x1="152.5" y1="15.40" x2="153.8" y2="15.40" stroke="#a4a4a4" stroke-width="0.45"/><line x1="155.5" y1="15.40" x2="164.43" y2="15.40" stroke="#a4a4a4" stroke-width="0.45"/><line x1="152.5" y1="16.55" x2="153.8" y2="16.55" stroke="#a4a4a4" stroke-width="0.45"/><line x1="155.5" y1="16.55" x2="166.58" y2="16.55" stroke="#a4a4a4" stroke-width="0.45"/><line x1="152.5" y1="17.70" x2="153.8" y2="17.70" stroke="#a4a4a4" stroke-width="0.45"/><line x1="155.5" y1="17.70" x2="167.33" y2="17.70" stroke="#a4a4a4" stroke-width="0.45"/><line x1="152.5" y1="18.85" x2="153.8" y2="18.85" stroke="#a4a4a4" stroke-width="0.45"/><line x1="155.5" y1="18.85" x2="160.52" y2="18.85" stroke="#a4a4a4" stroke-width="0.45"/><line x1="152.5" y1="22.40" x2="153.8" y2="22.40" stroke="#a4a4a4" stroke-width="0.45"/><line x1="155.5" y1="22.40" x2="169.23" y2="22.40" stroke="#a4a4a4" stroke-width="0.45"/><line x1="152.5" y1="23.55" x2="153.8" y2="23.55" stroke="#a4a4a4" stroke-width="0.45"/><line x1="155.5" y1="23.55" x2="172.19" y2="23.55" stroke="#a4a4a4" stroke-width="0.45"/><line x1="152.5" y1="24.70" x2="153.8" y2="24.70" stroke="#a4a4a4" stroke-width="0.45"/><line x1="155.5" y1="24.70" x2="175.05" y2="24.70" stroke="#a4a4a4" stroke-width="0.45"/><line x1="152.5" y1="25.85" x2="153.8" y2="25.85" stroke="#a4a4a4" stroke-width="0.45"/><line x1="155.5" y1="25.85" x2="174.23" y2="25.85" stroke="#a4a4a4" stroke-width="0.45"/><line x1="152.5" y1="27.00" x2="153.8" y2="27.00" stroke="#a4a4a4" stroke-width="0.45"/><line x1="155.5" y1="27.00" x2="171.81" y2="27.00" stroke="#a4a4a4" stroke-width="0.45"/><line x1="152.5" y1="28.15" x2="153.8" y2="28.15" stroke="#a4a4a4" stroke-width="0.45"/><line x1="155.5" y1="28.15" x2="169.61" y2="28.15" stroke="#a4a4a4" stroke-width="0.45"/><line x1="152.5" y1="29.30" x2="153.8" y2="29.30" stroke="#a4a4a4" stroke-width="0.45"/><line x1="155.5" y1="29.30" x2="175.82" y2="29.30" stroke="#a4a4a4" stroke-width="0.45"/><line x1="152.5" y1="30.45" x2="153.8" y2="30.45" stroke="#a4a4a4" stroke-width="0.45"/><line x1="155.5" y1="30.45" x2="169.31" y2="30.45" stroke="#a4a4a4" stroke-width="0.45"/><line x1="152.5" y1="31.60" x2="153.8" y2="31.60" stroke="#a4a4a4" stroke-width="0.45"/><line x1="155.5" y1="31.60" x2="171.63" y2="31.60" stroke="#a4a4a4" stroke-width="0.45"/><line x1="152.5" y1="32.75" x2="153.8" y2="32.75" stroke="#a4a4a4" stroke-width="0.45"/><line x1="155.5" y1="32.75" x2="166.45" y2="32.75" stroke="#a4a4a4" stroke-width="0.45"/><line x1="152.5" y1="36.30" x2="153.8" y2="36.30" stroke="#a4a4a4" stroke-width="0.45"/><line x1="155.5" y1="36.30" x2="168.58" y2="36.30" stroke="#a4a4a4" stroke-width="0.45"/><line x1="152.5" y1="37.45" x2="153.8" y2="37.45" stroke="#a4a4a4" stroke-width="0.45"/><line x1="155.5" y1="37.45" x2="173.16" y2="37.45" stroke="#a4a4a4" stroke-width="0.45"/><line x1="152.5" y1="38.60" x2="153.8" y2="38.60" stroke="#a4a4a4" stroke-width="0.45"/><line x1="155.5" y1="38.60" x2="171.30" y2="38.60" stroke="#a4a4a4" stroke-width="0.45"/><line x1="152.5" y1="39.75" x2="153.8" y2="39.75" stroke="#a4a4a4" stroke-width="0.45"/><line x1="155.5" y1="39.75" x2="175.39" y2="39.75" stroke="#a4a4a4" stroke-width="0.45"/><line x1="152.5" y1="40.90" x2="153.8" y2="40.90" stroke="#a4a4a4" stroke-width="0.45"/><line x1="155.5" y1="40.90" x2="171.60" y2="40.90" stroke="#a4a4a4" stroke-width="0.45"/><line x1="152.5" y1="42.05" x2="153.8" y2="42.05" stroke="#a4a4a4" stroke-width="0.45"/><line x1="155.5" y1="42.05" x2="170.44" y2="42.05" stroke="#a4a4a4" stroke-width="0.45"/><line x1="152.5" y1="43.20" x2="153.8" y2="43.20" stroke="#a4a4a4" stroke-width="0.45"/><line x1="155.5" y1="43.20" x2="167.29" y2="43.20" stroke="#a4a4a4" stroke-width="0.45"/><line x1="152.5" y1="46.75" x2="153.8" y2="46.75" stroke="#a4a4a4" stroke-width="0.45"/><line x1="155.5" y1="46.75" x2="164.13" y2="46.75" stroke="#a4a4a4" stroke-width="0.45"/><line x1="152.5" y1="47.90" x2="153.8" y2="47.90" stroke="#a4a4a4" stroke-width="0.45"/><line x1="155.5" y1="47.90" x2="165.05" y2="47.90" stroke="#a4a4a4" stroke-width="0.45"/><line x1="152.5" y1="49.05" x2="153.8" y2="49.05" stroke="#a4a4a4" stroke-width="0.45"/><line x1="155.5" y1="49.05" x2="169.66" y2="49.05" stroke="#a4a4a4" stroke-width="0.45"/><line x1="152.5" y1="50.20" x2="153.8" y2="50.20" stroke="#a4a4a4" stroke-width="0.45"/><line x1="155.5" y1="50.20" x2="174.87" y2="50.20" stroke="#a4a4a4" stroke-width="0.45"/><line x1="152.5" y1="51.35" x2="153.8" y2="51.35" stroke="#a4a4a4" stroke-width="0.45"/><line x1="155.5" y1="51.35" x2="167.50" y2="51.35" stroke="#a4a4a4" stroke-width="0.45"/><line x1="152.5" y1="52.50" x2="153.8" y2="52.50" stroke="#a4a4a4" stroke-width="0.45"/><line x1="155.5" y1="52.50" x2="173.62" y2="52.50" stroke="#a4a4a4" stroke-width="0.45"/><line x1="152.5" y1="53.65" x2="153.8" y2="53.65" stroke="#a4a4a4" stroke-width="0.45"/><line x1="155.5" y1="53.65" x2="170.30" y2="53.65" stroke="#a4a4a4" stroke-width="0.45"/><line x1="152.5" y1="54.80" x2="153.8" y2="54.80" stroke="#a4a4a4" stroke-width="0.45"/><line x1="155.5" y1="54.80" x2="175.36" y2="54.80" stroke="#a4a4a4" stroke-width="0.45"/><line x1="152.5" y1="55.95" x2="153.8" y2="55.95" stroke="#a4a4a4" stroke-width="0.45"/><line x1="155.5" y1="55.95" x2="172.94" y2="55.95" stroke="#a4a4a4" stroke-width="0.45"/><line x1="152.5" y1="57.10" x2="153.8" y2="57.10" stroke="#a4a4a4" stroke-width="0.45"/><line x1="155.5" y1="57.10" x2="162.82" y2="57.10" stroke="#a4a4a4" stroke-width="0.45"/><line x1="152.5" y1="60.65" x2="153.8" y2="60.65" stroke="#a4a4a4" stroke-width="0.45"/><line x1="155.5" y1="60.65" x2="166.27" y2="60.65" stroke="#a4a4a4" stroke-width="0.45"/><line x1="152.5" y1="61.80" x2="153.8" y2="61.80" stroke="#a4a4a4" stroke-width="0.45"/><line x1="155.5" y1="61.80" x2="169.32" y2="61.80" stroke="#a4a4a4" stroke-width="0.45"/><line x1="152.5" y1="62.95" x2="153.8" y2="62.95" stroke="#a4a4a4" stroke-width="0.45"/><line x1="155.5" y1="62.95" x2="172.11" y2="62.95" stroke="#a4a4a4" stroke-width="0.45"/><line x1="152.5" y1="64.10" x2="153.8" y2="64.10" stroke="#a4a4a4" stroke-width="0.45"/><line x1="155.5" y1="64.10" x2="166.37" y2="64.10" stroke="#a4a4a4" stroke-width="0.45"/><line x1="152.5" y1="65.25" x2="153.8" y2="65.25" stroke="#a4a4a4" stroke-width="0.45"/><line x1="155.5" y1="65.25" x2="168.89" y2="65.25" stroke="#a4a4a4" stroke-width="0.45"/><line x1="152.5" y1="66.40" x2="153.8" y2="66.40" stroke="#a4a4a4" stroke-width="0.45"/><line x1="155.5" y1="66.40" x2="165.36" y2="66.40" stroke="#a4a4a4" stroke-width="0.45"/><line x1="152.5" y1="67.55" x2="153.8" y2="67.55" stroke="#a4a4a4" stroke-width="0.45"/><line x1="155.5" y1="67.55" x2="163.34" y2="67.55" stroke="#a4a4a4" stroke-width="0.45"/><line x1="152.5" y1="71.10" x2="153.8" y2="71.10" stroke="#a4a4a4" stroke-width="0.45"/><line x1="155.5" y1="71.10" x2="163.63" y2="71.10" stroke="#a4a4a4" stroke-width="0.45"/><line x1="152.5" y1="72.25" x2="153.8" y2="72.25" stroke="#a4a4a4" stroke-width="0.45"/><line x1="155.5" y1="72.25" x2="166.64" y2="72.25" stroke="#a4a4a4" stroke-width="0.45"/><line x1="152.5" y1="73.40" x2="153.8" y2="73.40" stroke="#a4a4a4" stroke-width="0.45"/><line x1="155.5" y1="73.40" x2="167.08" y2="73.40" stroke="#a4a4a4" stroke-width="0.45"/><line x1="152.5" y1="74.55" x2="153.8" y2="74.55" stroke="#a4a4a4" stroke-width="0.45"/><line x1="155.5" y1="74.55" x2="165.00" y2="74.55" stroke="#a4a4a4" stroke-width="0.45"/><line x1="152.5" y1="75.70" x2="153.8" y2="75.70" stroke="#a4a4a4" stroke-width="0.45"/><line x1="155.5" y1="75.70" x2="173.59" y2="75.70" stroke="#a4a4a4" stroke-width="0.45"/><line x1="152.5" y1="76.85" x2="153.8" y2="76.85" stroke="#a4a4a4" stroke-width="0.45"/><line x1="155.5" y1="76.85" x2="163.56" y2="76.85" stroke="#a4a4a4" stroke-width="0.45"/><line x1="152.5" y1="78.00" x2="153.8" y2="78.00" stroke="#a4a4a4" stroke-width="0.45"/><line x1="155.5" y1="78.00" x2="161.69" y2="78.00" stroke="#a4a4a4" stroke-width="0.45"/><line x1="152.5" y1="81.55" x2="153.8" y2="81.55" stroke="#a4a4a4" stroke-width="0.45"/><line x1="155.5" y1="81.55" x2="172.97" y2="81.55" stroke="#a4a4a4" stroke-width="0.45"/><line x1="152.5" y1="82.70" x2="153.8" y2="82.70" stroke="#a4a4a4" stroke-width="0.45"/><line x1="155.5" y1="82.70" x2="168.89" y2="82.70" stroke="#a4a4a4" stroke-width="0.45"/><line x1="152.5" y1="83.85" x2="153.8" y2="83.85" stroke="#a4a4a4" stroke-width="0.45"/><line x1="155.5" y1="83.85" x2="166.66" y2="83.85" stroke="#a4a4a4" stroke-width="0.45"/><line x1="152.5" y1="85.00" x2="153.8" y2="85.00" stroke="#a4a4a4" stroke-width="0.45"/><line x1="155.5" y1="85.00" x2="165.94" y2="85.00" stroke="#a4a4a4" stroke-width="0.45"/><line x1="152.5" y1="86.15" x2="153.8" y2="86.15" stroke="#a4a4a4" stroke-width="0.45"/><line x1="155.5" y1="86.15" x2="167.36" y2="86.15" stroke="#a4a4a4" stroke-width="0.45"/><line x1="152.5" y1="87.30" x2="153.8" y2="87.30" stroke="#a4a4a4" stroke-width="0.45"/><line x1="155.5" y1="87.30" x2="173.16" y2="87.30" stroke="#a4a4a4" stroke-width="0.45"/><line x1="152.5" y1="88.45" x2="153.8" y2="88.45" stroke="#a4a4a4" stroke-width="0.45"/><line x1="155.5" y1="88.45" x2="166.12" y2="88.45" stroke="#a4a4a4" stroke-width="0.45"/><line x1="152.5" y1="89.60" x2="153.8" y2="89.60" stroke="#a4a4a4" stroke-width="0.45"/><line x1="155.5" y1="89.60" x2="163.22" y2="89.60" stroke="#a4a4a4" stroke-width="0.45"/><line x1="152.5" y1="93.15" x2="153.8" y2="93.15" stroke="#a4a4a4" stroke-width="0.45"/><line x1="155.5" y1="93.15" x2="170.93" y2="93.15" stroke="#a4a4a4" stroke-width="0.45"/><line x1="152.5" y1="94.30" x2="153.8" y2="94.30" stroke="#a4a4a4" stroke-width="0.45"/><line x1="155.5" y1="94.30" x2="166.19" y2="94.30" stroke="#a4a4a4" stroke-width="0.45"/><line x1="152.5" y1="95.45" x2="153.8" y2="95.45" stroke="#a4a4a4" stroke-width="0.45"/><line x1="155.5" y1="95.45" x2="173.12" y2="95.45" stroke="#a4a4a4" stroke-width="0.45"/><line x1="152.5" y1="96.60" x2="153.8" y2="96.60" stroke="#a4a4a4" stroke-width="0.45"/><line x1="155.5" y1="96.60" x2="166.87" y2="96.60" stroke="#a4a4a4" stroke-width="0.45"/></g></svg></div></div><div class="a" style="left:651.00px;top:409.00px;font-size:13px;line-height:16px;font-weight:bold;color:#444547;">A2.01-11</div><div class="a" style="left:651.00px;top:427.59px;font-size:11px;line-height:14px;font-weight:normal;color:#6b6c6e;">Building 1 Floor Plan</div><div class="card" style="left:834px;top:307px;border:1.8px solid #6f93ee;"><div class="img" style="height:96px;left:-0.8px;top:-0.8px;"><svg width="178" height="96" viewBox="0 0 178 96" style="position:absolute;left:0;top:0"><g transform="translate(-1 -2.5)"><rect x="77" y="46.5" width="25" height="10.2" fill="#b5b5b5"/><rect x="77" y="80.5" width="49.7" height="17.5" fill="#b0b0b0"/><rect x="91" y="56.7" width="35.7" height="23.8" fill="#e2e2e2"/><rect x="126.7" y="15" width="9.3" height="83" fill="#8f8f8f"/><line x1="127.20" y1="15" x2="127.20" y2="98" stroke="#3a3a3a" stroke-width="0.4"/><line x1="128.45" y1="15" x2="128.45" y2="98" stroke="#3a3a3a" stroke-width="0.4"/><line x1="129.70" y1="15" x2="129.70" y2="98" stroke="#3a3a3a" stroke-width="0.4"/><line x1="130.95" y1="15" x2="130.95" y2="98" stroke="#3a3a3a" stroke-width="0.4"/><line x1="132.20" y1="15" x2="132.20" y2="98" stroke="#3a3a3a" stroke-width="0.4"/><line x1="133.45" y1="15" x2="133.45" y2="98" stroke="#3a3a3a" stroke-width="0.4"/><line x1="134.70" y1="15" x2="134.70" y2="98" stroke="#3a3a3a" stroke-width="0.4"/><line x1="135.95" y1="15" x2="135.95" y2="98" stroke="#3a3a3a" stroke-width="0.4"/><line x1="126.7" y1="17" x2="136" y2="17" stroke="#6a6a6a" stroke-width="0.3"/><line x1="126.7" y1="20" x2="136" y2="20" stroke="#6a6a6a" stroke-width="0.3"/><line x1="126.7" y1="23" x2="136" y2="23" stroke="#6a6a6a" stroke-width="0.3"/><line x1="126.7" y1="26" x2="136" y2="26" stroke="#6a6a6a" stroke-width="0.3"/><line x1="126.7" y1="29" x2="136" y2="29" stroke="#6a6a6a" stroke-width="0.3"/><line x1="126.7" y1="32" x2="136" y2="32" stroke="#6a6a6a" stroke-width="0.3"/><line x1="126.7" y1="35" x2="136" y2="35" stroke="#6a6a6a" stroke-width="0.3"/><line x1="126.7" y1="38" x2="136" y2="38" stroke="#6a6a6a" stroke-width="0.3"/><line x1="126.7" y1="41" x2="136" y2="41" stroke="#6a6a6a" stroke-width="0.3"/><line x1="126.7" y1="44" x2="136" y2="44" stroke="#6a6a6a" stroke-width="0.3"/><line x1="126.7" y1="47" x2="136" y2="47" stroke="#6a6a6a" stroke-width="0.3"/><line x1="126.7" y1="50" x2="136" y2="50" stroke="#6a6a6a" stroke-width="0.3"/><line x1="126.7" y1="53" x2="136" y2="53" stroke="#6a6a6a" stroke-width="0.3"/><line x1="126.7" y1="56" x2="136" y2="56" stroke="#6a6a6a" stroke-width="0.3"/><line x1="126.7" y1="59" x2="136" y2="59" stroke="#6a6a6a" stroke-width="0.3"/><line x1="126.7" y1="62" x2="136" y2="62" stroke="#6a6a6a" stroke-width="0.3"/><line x1="126.7" y1="65" x2="136" y2="65" stroke="#6a6a6a" stroke-width="0.3"/><line x1="126.7" y1="68" x2="136" y2="68" stroke="#6a6a6a" stroke-width="0.3"/><line x1="126.7" y1="71" x2="136" y2="71" stroke="#6a6a6a" stroke-width="0.3"/><line x1="126.7" y1="74" x2="136" y2="74" stroke="#6a6a6a" stroke-width="0.3"/><line x1="126.7" y1="77" x2="136" y2="77" stroke="#6a6a6a" stroke-width="0.3"/><line x1="126.7" y1="80" x2="136" y2="80" stroke="#6a6a6a" stroke-width="0.3"/><line x1="126.7" y1="83" x2="136" y2="83" stroke="#6a6a6a" stroke-width="0.3"/><line x1="126.7" y1="86" x2="136" y2="86" stroke="#6a6a6a" stroke-width="0.3"/><line x1="126.7" y1="89" x2="136" y2="89" stroke="#6a6a6a" stroke-width="0.3"/><line x1="126.7" y1="92" x2="136" y2="92" stroke="#6a6a6a" stroke-width="0.3"/><line x1="126.7" y1="95" x2="136" y2="95" stroke="#6a6a6a" stroke-width="0.3"/><rect x="136" y="88.3" width="11.5" height="9.7" fill="#9a9a9a"/><line x1="136.50" y1="88.3" x2="136.50" y2="98" stroke="#444" stroke-width="0.35"/><line x1="137.90" y1="88.3" x2="137.90" y2="98" stroke="#444" stroke-width="0.35"/><line x1="139.30" y1="88.3" x2="139.30" y2="98" stroke="#444" stroke-width="0.35"/><line x1="140.70" y1="88.3" x2="140.70" y2="98" stroke="#444" stroke-width="0.35"/><line x1="142.10" y1="88.3" x2="142.10" y2="98" stroke="#444" stroke-width="0.35"/><line x1="143.50" y1="88.3" x2="143.50" y2="98" stroke="#444" stroke-width="0.35"/><line x1="144.90" y1="88.3" x2="144.90" y2="98" stroke="#444" stroke-width="0.35"/><line x1="146.30" y1="88.3" x2="146.30" y2="98" stroke="#444" stroke-width="0.35"/><line x1="147.5" y1="73.5" x2="147.5" y2="98" stroke="#2a2a2a" stroke-width="1.2"/><line x1="85.9" y1="15" x2="85.9" y2="46.5" stroke="#9a9a9a" stroke-width="0.4" stroke-dasharray="1.5 1"/><line x1="93.7" y1="15" x2="93.7" y2="46.5" stroke="#9a9a9a" stroke-width="0.4" stroke-dasharray="1.5 1"/><line x1="102.2" y1="15" x2="102.2" y2="46.5" stroke="#9a9a9a" stroke-width="0.4" stroke-dasharray="1.5 1"/><line x1="110" y1="15" x2="110" y2="46.5" stroke="#9a9a9a" stroke-width="0.4" stroke-dasharray="1.5 1"/><line x1="118.2" y1="15" x2="118.2" y2="46.5" stroke="#9a9a9a" stroke-width="0.4" stroke-dasharray="1.5 1"/><line x1="77" y1="23.5" x2="126.7" y2="23.5" stroke="#aaa" stroke-width="0.35" stroke-dasharray="1.5 1"/><line x1="77" y1="38.9" x2="126.7" y2="38.9" stroke="#aaa" stroke-width="0.35" stroke-dasharray="1.5 1"/><path d="M77.3 98 V15.1 H136" fill="none" stroke="#2a2a2a" stroke-width="1.4"/><rect x="77" y="14.3" width="59" height="2.2" fill="#3a3a3a"/><path d="M77 31.1 H126.7 M77 46.5 H126.7" stroke="#2a2a2a" stroke-width="1.2"/><path d="M77 56.7 H100 M91 63.1 H126 M91 71.6 H126 M77 80.5 H136 M91 90.7 H117 M90.3 56.7 V98 M116.9 80.5 V98 M102 46.5 V56.7" fill="none" stroke="#2a2a2a" stroke-width="1.0"/><path d="M81.5 58 V79 M87 58 V79" stroke="#888" stroke-width="0.5"/><circle cx="80" cy="51.5" r="1.6" fill="none" stroke="#333" stroke-width="0.5"/><circle cx="85" cy="51.5" r="1.6" fill="none" stroke="#333" stroke-width="0.5"/><circle cx="90" cy="51.5" r="1.6" fill="none" stroke="#333" stroke-width="0.5"/><circle cx="95" cy="51.5" r="1.6" fill="none" stroke="#333" stroke-width="0.5"/><circle cx="98" cy="85.5" r="1.6" fill="none" stroke="#333" stroke-width="0.5"/><circle cx="108" cy="85.5" r="1.6" fill="none" stroke="#333" stroke-width="0.5"/><circle cx="112" cy="85.5" r="1.6" fill="none" stroke="#333" stroke-width="0.5"/><circle cx="120" cy="85.5" r="1.6" fill="none" stroke="#333" stroke-width="0.5"/><circle cx="85" cy="90" r="1.6" fill="none" stroke="#333" stroke-width="0.5"/><line x1="102" y1="19.00" x2="113.87" y2="19.00" stroke="#555" stroke-width="0.5"/><line x1="102" y1="20.10" x2="110.74" y2="20.10" stroke="#555" stroke-width="0.5"/><line x1="102" y1="21.20" x2="112.31" y2="21.20" stroke="#555" stroke-width="0.5"/><line x1="103" y1="33.50" x2="113.41" y2="33.50" stroke="#555" stroke-width="0.5"/><line x1="103" y1="34.60" x2="110.29" y2="34.60" stroke="#555" stroke-width="0.5"/><line x1="103" y1="35.70" x2="109.47" y2="35.70" stroke="#555" stroke-width="0.5"/><line x1="95" y1="60.00" x2="104.62" y2="60.00" stroke="#555" stroke-width="0.5"/><line x1="95" y1="61.10" x2="101.73" y2="61.10" stroke="#555" stroke-width="0.5"/><line x1="95" y1="62.20" x2="103.29" y2="62.20" stroke="#555" stroke-width="0.5"/><line x1="95" y1="67.00" x2="106.34" y2="67.00" stroke="#555" stroke-width="0.5"/><line x1="95" y1="68.10" x2="106.23" y2="68.10" stroke="#555" stroke-width="0.5"/><line x1="95" y1="69.20" x2="101.71" y2="69.20" stroke="#555" stroke-width="0.5"/><line x1="95" y1="75.00" x2="101.49" y2="75.00" stroke="#555" stroke-width="0.5"/><line x1="95" y1="76.10" x2="102.33" y2="76.10" stroke="#555" stroke-width="0.5"/><line x1="95" y1="77.20" x2="105.97" y2="77.20" stroke="#555" stroke-width="0.5"/><line x1="93" y1="84.00" x2="99.15" y2="84.00" stroke="#555" stroke-width="0.5"/><line x1="93" y1="85.10" x2="100.35" y2="85.10" stroke="#555" stroke-width="0.5"/><line x1="93" y1="86.20" x2="99.64" y2="86.20" stroke="#555" stroke-width="0.5"/><line x1="80" y1="87.00" x2="86.77" y2="87.00" stroke="#555" stroke-width="0.5"/><line x1="80" y1="88.10" x2="89.14" y2="88.10" stroke="#555" stroke-width="0.5"/><line x1="80" y1="89.20" x2="87.10" y2="89.20" stroke="#555" stroke-width="0.5"/><path d="M105 44 Q112 40 122 37 M104 68 Q112 66 120 62" fill="none" stroke="#555" stroke-width="0.5"/><circle cx="66.4" cy="16.1" r="1.3" fill="none" stroke="#8a8aa0" stroke-width="0.45"/><line x1="67.8" y1="16.1" x2="76" y2="16.1" stroke="#aab" stroke-width="0.35"/><circle cx="66.4" cy="31.1" r="1.3" fill="none" stroke="#8a8aa0" stroke-width="0.45"/><line x1="67.8" y1="31.1" x2="76" y2="31.1" stroke="#aab" stroke-width="0.35"/><circle cx="66.4" cy="46.8" r="1.3" fill="none" stroke="#8a8aa0" stroke-width="0.45"/><line x1="67.8" y1="46.8" x2="76" y2="46.8" stroke="#aab" stroke-width="0.35"/><circle cx="66.4" cy="63.1" r="1.3" fill="none" stroke="#8a8aa0" stroke-width="0.45"/><line x1="67.8" y1="63.1" x2="76" y2="63.1" stroke="#aab" stroke-width="0.35"/><circle cx="66.4" cy="80.2" r="1.3" fill="none" stroke="#8a8aa0" stroke-width="0.45"/><line x1="67.8" y1="80.2" x2="76" y2="80.2" stroke="#aab" stroke-width="0.35"/><circle cx="66.4" cy="95.1" r="1.3" fill="none" stroke="#8a8aa0" stroke-width="0.45"/><line x1="67.8" y1="95.1" x2="76" y2="95.1" stroke="#aab" stroke-width="0.35"/><path d="M59 10 Q64 10 69 11 L76 14.5" fill="none" stroke="#c99" stroke-width="0.5"/><path d="M65 66 Q71 66 76 62" fill="none" stroke="#555" stroke-width="0.6"/><line x1="62" y1="66.50" x2="66.93" y2="66.50" stroke="#888" stroke-width="0.5"/><line x1="62" y1="67.70" x2="68.07" y2="67.70" stroke="#888" stroke-width="0.5"/><line x1="62" y1="68.90" x2="68.03" y2="68.90" stroke="#888" stroke-width="0.5"/><line x1="62" y1="88.00" x2="66.95" y2="88.00" stroke="#888" stroke-width="0.5"/><line x1="62" y1="89.20" x2="68.25" y2="89.20" stroke="#888" stroke-width="0.5"/><line x1="62" y1="90.40" x2="67.50" y2="90.40" stroke="#888" stroke-width="0.5"/><line x1="78.3" y1="3" x2="78.3" y2="14" stroke="#c99" stroke-width="0.4" stroke-dasharray="1.5 1"/><circle cx="78.3" cy="4.5" r="1.2" fill="none" stroke="#999" stroke-width="0.4"/><line x1="93.3" y1="3" x2="93.3" y2="14" stroke="#c99" stroke-width="0.4" stroke-dasharray="1.5 1"/><circle cx="93.3" cy="4.5" r="1.2" fill="none" stroke="#999" stroke-width="0.4"/><line x1="110.3" y1="3" x2="110.3" y2="14" stroke="#c99" stroke-width="0.4" stroke-dasharray="1.5 1"/><circle cx="110.3" cy="4.5" r="1.2" fill="none" stroke="#999" stroke-width="0.4"/><line x1="127.3" y1="3" x2="127.3" y2="14" stroke="#c99" stroke-width="0.4" stroke-dasharray="1.5 1"/><circle cx="127.3" cy="4.5" r="1.2" fill="none" stroke="#999" stroke-width="0.4"/><path d="M80 3 Q80 8 78.3 10 M125 3 Q125 8 127.3 10" fill="none" stroke="#999" stroke-width="0.4"/><rect x="138" y="25.5" width="12" height="5" rx="2.5" fill="none" stroke="#777" stroke-width="0.45"/><line x1="139.5" y1="27.20" x2="146.81" y2="27.20" stroke="#666" stroke-width="0.5"/><line x1="139.5" y1="28.40" x2="144.50" y2="28.40" stroke="#666" stroke-width="0.5"/><rect x="138" y="33.0" width="12" height="5" rx="2.5" fill="none" stroke="#777" stroke-width="0.45"/><line x1="139.5" y1="34.70" x2="144.98" y2="34.70" stroke="#666" stroke-width="0.5"/><line x1="139.5" y1="35.90" x2="145.82" y2="35.90" stroke="#666" stroke-width="0.5"/><rect x="138" y="40.0" width="12" height="5" rx="2.5" fill="none" stroke="#777" stroke-width="0.45"/><line x1="139.5" y1="41.70" x2="147.28" y2="41.70" stroke="#666" stroke-width="0.5"/><line x1="139.5" y1="42.90" x2="145.97" y2="42.90" stroke="#666" stroke-width="0.5"/><line x1="138" y1="25.00" x2="144.64" y2="25.00" stroke="#666" stroke-width="0.6"/><line x1="138" y1="50.00" x2="143.63" y2="50.00" stroke="#666" stroke-width="0.6"/><line x1="138" y1="55.00" x2="143.77" y2="55.00" stroke="#666" stroke-width="0.6"/><line x1="138" y1="60.00" x2="143.47" y2="60.00" stroke="#666" stroke-width="0.6"/><line x1="138" y1="66.00" x2="146.94" y2="66.00" stroke="#666" stroke-width="0.6"/><line x1="138" y1="72.00" x2="146.49" y2="72.00" stroke="#666" stroke-width="0.6"/><line x1="146" y1="58" x2="147.5" y2="73.5" stroke="#c99" stroke-width="0.4"/><circle cx="151" cy="57" r="1.3" fill="none" stroke="#aaa" stroke-width="0.4"/><line x1="137" y1="5.00" x2="146.47" y2="5.00" stroke="#777" stroke-width="0.5"/><line x1="137" y1="6.20" x2="144.64" y2="6.20" stroke="#777" stroke-width="0.5"/><line x1="137" y1="7.40" x2="145.54" y2="7.40" stroke="#777" stroke-width="0.5"/><line x1="151.0" y1="0" x2="151.0" y2="98" stroke="#d0d0d0" stroke-width="0.5"/><line x1="178.0" y1="0" x2="178.0" y2="98" stroke="#d0d0d0" stroke-width="0.5"/><line x1="153.0" y1="3.2" x2="160.5" y2="3.2" stroke="#666" stroke-width="0.8"/><line x1="151.0" y1="4.8" x2="178.0" y2="4.8" stroke="#ccc" stroke-width="0.4"/><line x1="152.5" y1="6.6" x2="165.5" y2="6.6" stroke="#888" stroke-width="0.55"/><line x1="152.5" y1="8.50" x2="153.8" y2="8.50" stroke="#a4a4a4" stroke-width="0.45"/><line x1="155.5" y1="8.50" x2="164.04" y2="8.50" stroke="#a4a4a4" stroke-width="0.45"/><line x1="152.5" y1="9.65" x2="153.8" y2="9.65" stroke="#a4a4a4" stroke-width="0.45"/><line x1="155.5" y1="9.65" x2="174.33" y2="9.65" stroke="#a4a4a4" stroke-width="0.45"/><line x1="152.5" y1="10.80" x2="153.8" y2="10.80" stroke="#a4a4a4" stroke-width="0.45"/><line x1="155.5" y1="10.80" x2="165.21" y2="10.80" stroke="#a4a4a4" stroke-width="0.45"/><line x1="152.5" y1="11.95" x2="153.8" y2="11.95" stroke="#a4a4a4" stroke-width="0.45"/><line x1="155.5" y1="11.95" x2="170.17" y2="11.95" stroke="#a4a4a4" stroke-width="0.45"/><line x1="152.5" y1="13.10" x2="153.8" y2="13.10" stroke="#a4a4a4" stroke-width="0.45"/><line x1="155.5" y1="13.10" x2="175.45" y2="13.10" stroke="#a4a4a4" stroke-width="0.45"/><line x1="152.5" y1="14.25" x2="153.8" y2="14.25" stroke="#a4a4a4" stroke-width="0.45"/><line x1="155.5" y1="14.25" x2="169.76" y2="14.25" stroke="#a4a4a4" stroke-width="0.45"/><line x1="152.5" y1="15.40" x2="153.8" y2="15.40" stroke="#a4a4a4" stroke-width="0.45"/><line x1="155.5" y1="15.40" x2="168.02" y2="15.40" stroke="#a4a4a4" stroke-width="0.45"/><line x1="152.5" y1="16.55" x2="153.8" y2="16.55" stroke="#a4a4a4" stroke-width="0.45"/><line x1="155.5" y1="16.55" x2="166.22" y2="16.55" stroke="#a4a4a4" stroke-width="0.45"/><line x1="152.5" y1="20.10" x2="153.8" y2="20.10" stroke="#a4a4a4" stroke-width="0.45"/><line x1="155.5" y1="20.10" x2="167.48" y2="20.10" stroke="#a4a4a4" stroke-width="0.45"/><line x1="152.5" y1="21.25" x2="153.8" y2="21.25" stroke="#a4a4a4" stroke-width="0.45"/><line x1="155.5" y1="21.25" x2="172.18" y2="21.25" stroke="#a4a4a4" stroke-width="0.45"/><line x1="152.5" y1="22.40" x2="153.8" y2="22.40" stroke="#a4a4a4" stroke-width="0.45"/><line x1="155.5" y1="22.40" x2="165.12" y2="22.40" stroke="#a4a4a4" stroke-width="0.45"/><line x1="152.5" y1="23.55" x2="153.8" y2="23.55" stroke="#a4a4a4" stroke-width="0.45"/><line x1="155.5" y1="23.55" x2="175.37" y2="23.55" stroke="#a4a4a4" stroke-width="0.45"/><line x1="152.5" y1="24.70" x2="153.8" y2="24.70" stroke="#a4a4a4" stroke-width="0.45"/><line x1="155.5" y1="24.70" x2="173.46" y2="24.70" stroke="#a4a4a4" stroke-width="0.45"/><line x1="152.5" y1="25.85" x2="153.8" y2="25.85" stroke="#a4a4a4" stroke-width="0.45"/><line x1="155.5" y1="25.85" x2="160.26" y2="25.85" stroke="#a4a4a4" stroke-width="0.45"/><line x1="152.5" y1="29.40" x2="153.8" y2="29.40" stroke="#a4a4a4" stroke-width="0.45"/><line x1="155.5" y1="29.40" x2="167.29" y2="29.40" stroke="#a4a4a4" stroke-width="0.45"/><line x1="152.5" y1="30.55" x2="153.8" y2="30.55" stroke="#a4a4a4" stroke-width="0.45"/><line x1="155.5" y1="30.55" x2="170.65" y2="30.55" stroke="#a4a4a4" stroke-width="0.45"/><line x1="152.5" y1="31.70" x2="153.8" y2="31.70" stroke="#a4a4a4" stroke-width="0.45"/><line x1="155.5" y1="31.70" x2="171.26" y2="31.70" stroke="#a4a4a4" stroke-width="0.45"/><line x1="152.5" y1="32.85" x2="153.8" y2="32.85" stroke="#a4a4a4" stroke-width="0.45"/><line x1="155.5" y1="32.85" x2="168.62" y2="32.85" stroke="#a4a4a4" stroke-width="0.45"/><line x1="152.5" y1="34.00" x2="153.8" y2="34.00" stroke="#a4a4a4" stroke-width="0.45"/><line x1="155.5" y1="34.00" x2="174.15" y2="34.00" stroke="#a4a4a4" stroke-width="0.45"/><line x1="152.5" y1="35.15" x2="153.8" y2="35.15" stroke="#a4a4a4" stroke-width="0.45"/><line x1="155.5" y1="35.15" x2="169.27" y2="35.15" stroke="#a4a4a4" stroke-width="0.45"/><line x1="152.5" y1="36.30" x2="153.8" y2="36.30" stroke="#a4a4a4" stroke-width="0.45"/><line x1="155.5" y1="36.30" x2="173.24" y2="36.30" stroke="#a4a4a4" stroke-width="0.45"/><line x1="152.5" y1="37.45" x2="153.8" y2="37.45" stroke="#a4a4a4" stroke-width="0.45"/><line x1="155.5" y1="37.45" x2="164.34" y2="37.45" stroke="#a4a4a4" stroke-width="0.45"/><line x1="152.5" y1="38.60" x2="153.8" y2="38.60" stroke="#a4a4a4" stroke-width="0.45"/><line x1="155.5" y1="38.60" x2="163.06" y2="38.60" stroke="#a4a4a4" stroke-width="0.45"/><line x1="152.5" y1="42.15" x2="153.8" y2="42.15" stroke="#a4a4a4" stroke-width="0.45"/><line x1="155.5" y1="42.15" x2="167.72" y2="42.15" stroke="#a4a4a4" stroke-width="0.45"/><line x1="152.5" y1="43.30" x2="153.8" y2="43.30" stroke="#a4a4a4" stroke-width="0.45"/><line x1="155.5" y1="43.30" x2="167.35" y2="43.30" stroke="#a4a4a4" stroke-width="0.45"/><line x1="152.5" y1="44.45" x2="153.8" y2="44.45" stroke="#a4a4a4" stroke-width="0.45"/><line x1="155.5" y1="44.45" x2="163.63" y2="44.45" stroke="#a4a4a4" stroke-width="0.45"/><line x1="152.5" y1="45.60" x2="153.8" y2="45.60" stroke="#a4a4a4" stroke-width="0.45"/><line x1="155.5" y1="45.60" x2="166.62" y2="45.60" stroke="#a4a4a4" stroke-width="0.45"/><line x1="152.5" y1="46.75" x2="153.8" y2="46.75" stroke="#a4a4a4" stroke-width="0.45"/><line x1="155.5" y1="46.75" x2="166.59" y2="46.75" stroke="#a4a4a4" stroke-width="0.45"/><line x1="152.5" y1="47.90" x2="153.8" y2="47.90" stroke="#a4a4a4" stroke-width="0.45"/><line x1="155.5" y1="47.90" x2="161.25" y2="47.90" stroke="#a4a4a4" stroke-width="0.45"/><line x1="152.5" y1="51.45" x2="153.8" y2="51.45" stroke="#a4a4a4" stroke-width="0.45"/><line x1="155.5" y1="51.45" x2="165.50" y2="51.45" stroke="#a4a4a4" stroke-width="0.45"/><line x1="152.5" y1="52.60" x2="153.8" y2="52.60" stroke="#a4a4a4" stroke-width="0.45"/><line x1="155.5" y1="52.60" x2="164.60" y2="52.60" stroke="#a4a4a4" stroke-width="0.45"/><line x1="152.5" y1="53.75" x2="153.8" y2="53.75" stroke="#a4a4a4" stroke-width="0.45"/><line x1="155.5" y1="53.75" x2="172.21" y2="53.75" stroke="#a4a4a4" stroke-width="0.45"/><line x1="152.5" y1="54.90" x2="153.8" y2="54.90" stroke="#a4a4a4" stroke-width="0.45"/><line x1="155.5" y1="54.90" x2="163.87" y2="54.90" stroke="#a4a4a4" stroke-width="0.45"/><line x1="152.5" y1="56.05" x2="153.8" y2="56.05" stroke="#a4a4a4" stroke-width="0.45"/><line x1="155.5" y1="56.05" x2="169.41" y2="56.05" stroke="#a4a4a4" stroke-width="0.45"/><line x1="152.5" y1="57.20" x2="153.8" y2="57.20" stroke="#a4a4a4" stroke-width="0.45"/><line x1="155.5" y1="57.20" x2="164.66" y2="57.20" stroke="#a4a4a4" stroke-width="0.45"/><line x1="152.5" y1="58.35" x2="153.8" y2="58.35" stroke="#a4a4a4" stroke-width="0.45"/><line x1="155.5" y1="58.35" x2="165.39" y2="58.35" stroke="#a4a4a4" stroke-width="0.45"/><line x1="152.5" y1="59.50" x2="153.8" y2="59.50" stroke="#a4a4a4" stroke-width="0.45"/><line x1="155.5" y1="59.50" x2="163.96" y2="59.50" stroke="#a4a4a4" stroke-width="0.45"/><line x1="152.5" y1="60.65" x2="153.8" y2="60.65" stroke="#a4a4a4" stroke-width="0.45"/><line x1="155.5" y1="60.65" x2="161.70" y2="60.65" stroke="#a4a4a4" stroke-width="0.45"/><line x1="152.5" y1="64.20" x2="153.8" y2="64.20" stroke="#a4a4a4" stroke-width="0.45"/><line x1="155.5" y1="64.20" x2="170.47" y2="64.20" stroke="#a4a4a4" stroke-width="0.45"/><line x1="152.5" y1="65.35" x2="153.8" y2="65.35" stroke="#a4a4a4" stroke-width="0.45"/><line x1="155.5" y1="65.35" x2="176.24" y2="65.35" stroke="#a4a4a4" stroke-width="0.45"/><line x1="152.5" y1="66.50" x2="153.8" y2="66.50" stroke="#a4a4a4" stroke-width="0.45"/><line x1="155.5" y1="66.50" x2="167.52" y2="66.50" stroke="#a4a4a4" stroke-width="0.45"/><line x1="152.5" y1="67.65" x2="153.8" y2="67.65" stroke="#a4a4a4" stroke-width="0.45"/><line x1="155.5" y1="67.65" x2="175.45" y2="67.65" stroke="#a4a4a4" stroke-width="0.45"/><line x1="152.5" y1="68.80" x2="153.8" y2="68.80" stroke="#a4a4a4" stroke-width="0.45"/><line x1="155.5" y1="68.80" x2="165.86" y2="68.80" stroke="#a4a4a4" stroke-width="0.45"/><line x1="152.5" y1="69.95" x2="153.8" y2="69.95" stroke="#a4a4a4" stroke-width="0.45"/><line x1="155.5" y1="69.95" x2="168.22" y2="69.95" stroke="#a4a4a4" stroke-width="0.45"/><line x1="152.5" y1="71.10" x2="153.8" y2="71.10" stroke="#a4a4a4" stroke-width="0.45"/><line x1="155.5" y1="71.10" x2="166.03" y2="71.10" stroke="#a4a4a4" stroke-width="0.45"/><line x1="152.5" y1="74.65" x2="153.8" y2="74.65" stroke="#a4a4a4" stroke-width="0.45"/><line x1="155.5" y1="74.65" x2="172.59" y2="74.65" stroke="#a4a4a4" stroke-width="0.45"/><line x1="152.5" y1="75.80" x2="153.8" y2="75.80" stroke="#a4a4a4" stroke-width="0.45"/><line x1="155.5" y1="75.80" x2="171.80" y2="75.80" stroke="#a4a4a4" stroke-width="0.45"/><line x1="152.5" y1="76.95" x2="153.8" y2="76.95" stroke="#a4a4a4" stroke-width="0.45"/><line x1="155.5" y1="76.95" x2="172.10" y2="76.95" stroke="#a4a4a4" stroke-width="0.45"/><line x1="152.5" y1="78.10" x2="153.8" y2="78.10" stroke="#a4a4a4" stroke-width="0.45"/><line x1="155.5" y1="78.10" x2="172.07" y2="78.10" stroke="#a4a4a4" stroke-width="0.45"/><line x1="152.5" y1="79.25" x2="153.8" y2="79.25" stroke="#a4a4a4" stroke-width="0.45"/><line x1="155.5" y1="79.25" x2="169.83" y2="79.25" stroke="#a4a4a4" stroke-width="0.45"/><line x1="152.5" y1="80.40" x2="153.8" y2="80.40" stroke="#a4a4a4" stroke-width="0.45"/><line x1="155.5" y1="80.40" x2="160.57" y2="80.40" stroke="#a4a4a4" stroke-width="0.45"/><line x1="152.5" y1="83.95" x2="153.8" y2="83.95" stroke="#a4a4a4" stroke-width="0.45"/><line x1="155.5" y1="83.95" x2="174.48" y2="83.95" stroke="#a4a4a4" stroke-width="0.45"/><line x1="152.5" y1="85.10" x2="153.8" y2="85.10" stroke="#a4a4a4" stroke-width="0.45"/><line x1="155.5" y1="85.10" x2="171.58" y2="85.10" stroke="#a4a4a4" stroke-width="0.45"/><line x1="152.5" y1="86.25" x2="153.8" y2="86.25" stroke="#a4a4a4" stroke-width="0.45"/><line x1="155.5" y1="86.25" x2="168.49" y2="86.25" stroke="#a4a4a4" stroke-width="0.45"/><line x1="152.5" y1="87.40" x2="153.8" y2="87.40" stroke="#a4a4a4" stroke-width="0.45"/><line x1="155.5" y1="87.40" x2="173.04" y2="87.40" stroke="#a4a4a4" stroke-width="0.45"/><line x1="152.5" y1="88.55" x2="153.8" y2="88.55" stroke="#a4a4a4" stroke-width="0.45"/><line x1="155.5" y1="88.55" x2="168.84" y2="88.55" stroke="#a4a4a4" stroke-width="0.45"/><line x1="152.5" y1="89.70" x2="153.8" y2="89.70" stroke="#a4a4a4" stroke-width="0.45"/><line x1="155.5" y1="89.70" x2="166.10" y2="89.70" stroke="#a4a4a4" stroke-width="0.45"/><line x1="152.5" y1="93.25" x2="153.8" y2="93.25" stroke="#a4a4a4" stroke-width="0.45"/><line x1="155.5" y1="93.25" x2="171.26" y2="93.25" stroke="#a4a4a4" stroke-width="0.45"/><line x1="152.5" y1="94.40" x2="153.8" y2="94.40" stroke="#a4a4a4" stroke-width="0.45"/><line x1="155.5" y1="94.40" x2="175.43" y2="94.40" stroke="#a4a4a4" stroke-width="0.45"/><line x1="152.5" y1="95.55" x2="153.8" y2="95.55" stroke="#a4a4a4" stroke-width="0.45"/><line x1="155.5" y1="95.55" x2="170.52" y2="95.55" stroke="#a4a4a4" stroke-width="0.45"/><line x1="152.5" y1="96.70" x2="153.8" y2="96.70" stroke="#a4a4a4" stroke-width="0.45"/><line x1="155.5" y1="96.70" x2="168.88" y2="96.70" stroke="#a4a4a4" stroke-width="0.45"/></g></svg></div></div><div class="a" style="left:843.00px;top:409.00px;font-size:13px;line-height:16px;font-weight:bold;color:#444547;">A2.03-1</div><div class="a" style="left:843.00px;top:427.59px;font-size:11px;line-height:14px;font-weight:normal;color:#6b6c6e;">Building 1 Ceiling Plan</div><div class="card" style="left:1026px;top:307px;"><div class="img" style="height:96px;"><svg width="178" height="96" viewBox="0 0 178 96" style="position:absolute;left:0;top:0"><g transform="translate(-1 -2.5)"><line x1="3" y1="1" x2="3" y2="3" stroke="#aaa" stroke-width="0.4"/><line x1="28" y1="1" x2="28" y2="3" stroke="#aaa" stroke-width="0.4"/><line x1="53" y1="1" x2="53" y2="3" stroke="#aaa" stroke-width="0.4"/><line x1="74" y1="1" x2="74" y2="3" stroke="#aaa" stroke-width="0.4"/><line x1="97" y1="1" x2="97" y2="3" stroke="#aaa" stroke-width="0.4"/><line x1="121" y1="1" x2="121" y2="3" stroke="#aaa" stroke-width="0.4"/><line x1="143" y1="1" x2="143" y2="3" stroke="#aaa" stroke-width="0.4"/><path d="M2 32 V17.5 L28 14.3 L53 17.5 V32 Z" fill="#ececec" stroke="#888" stroke-width="0.5"/><line x1="3.00" y1="17" x2="3.00" y2="32" stroke="#d0d0d0" stroke-width="0.35"/><line x1="4.95" y1="17" x2="4.95" y2="32" stroke="#d0d0d0" stroke-width="0.35"/><line x1="6.90" y1="17" x2="6.90" y2="32" stroke="#d0d0d0" stroke-width="0.35"/><line x1="8.85" y1="17" x2="8.85" y2="32" stroke="#d0d0d0" stroke-width="0.35"/><line x1="10.80" y1="17" x2="10.80" y2="32" stroke="#d0d0d0" stroke-width="0.35"/><line x1="12.75" y1="17" x2="12.75" y2="32" stroke="#d0d0d0" stroke-width="0.35"/><line x1="14.70" y1="17" x2="14.70" y2="32" stroke="#d0d0d0" stroke-width="0.35"/><line x1="16.65" y1="17" x2="16.65" y2="32" stroke="#d0d0d0" stroke-width="0.35"/><line x1="18.60" y1="17" x2="18.60" y2="32" stroke="#d0d0d0" stroke-width="0.35"/><line x1="20.55" y1="17" x2="20.55" y2="32" stroke="#d0d0d0" stroke-width="0.35"/><line x1="22.50" y1="17" x2="22.50" y2="32" stroke="#d0d0d0" stroke-width="0.35"/><line x1="24.45" y1="17" x2="24.45" y2="32" stroke="#d0d0d0" stroke-width="0.35"/><line x1="26.40" y1="17" x2="26.40" y2="32" stroke="#d0d0d0" stroke-width="0.35"/><line x1="28.35" y1="17" x2="28.35" y2="32" stroke="#d0d0d0" stroke-width="0.35"/><line x1="30.30" y1="17" x2="30.30" y2="32" stroke="#d0d0d0" stroke-width="0.35"/><line x1="32.25" y1="17" x2="32.25" y2="32" stroke="#d0d0d0" stroke-width="0.35"/><line x1="34.20" y1="17" x2="34.20" y2="32" stroke="#d0d0d0" stroke-width="0.35"/><line x1="36.15" y1="17" x2="36.15" y2="32" stroke="#d0d0d0" stroke-width="0.35"/><line x1="38.10" y1="17" x2="38.10" y2="32" stroke="#d0d0d0" stroke-width="0.35"/><line x1="40.05" y1="17" x2="40.05" y2="32" stroke="#d0d0d0" stroke-width="0.35"/><line x1="42.00" y1="17" x2="42.00" y2="32" stroke="#d0d0d0" stroke-width="0.35"/><line x1="43.95" y1="17" x2="43.95" y2="32" stroke="#d0d0d0" stroke-width="0.35"/><line x1="45.90" y1="17" x2="45.90" y2="32" stroke="#d0d0d0" stroke-width="0.35"/><line x1="47.85" y1="17" x2="47.85" y2="32" stroke="#d0d0d0" stroke-width="0.35"/><line x1="49.80" y1="17" x2="49.80" y2="32" stroke="#d0d0d0" stroke-width="0.35"/><line x1="51.75" y1="17" x2="51.75" y2="32" stroke="#d0d0d0" stroke-width="0.35"/><line x1="1" y1="32" x2="62" y2="32" stroke="#666" stroke-width="0.6"/><path d="M57 30 H62 M57 32.5 H63" stroke="#888" stroke-width="0.4"/><path d="M70.5 31.3 V20.5 L96 16.3 L122 20.5 V31.3 Z" fill="#dcb4b4" stroke="#777" stroke-width="0.55"/><rect x="88.6" y="18" width="16" height="9" fill="#fafafa" stroke="#888" stroke-width="0.4"/><path d="M72 27.5 H85 M108 27.5 H120" stroke="#fff" stroke-width="1.2"/><rect x="122" y="26.5" width="24.5" height="6" fill="#f3f3f3" stroke="#777" stroke-width="0.45"/><path d="M126 26.5 V32.5 M131 26.5 V32.5 M136 26.5 V32.5" stroke="#999" stroke-width="0.35"/><rect x="141" y="18.5" width="5.5" height="14" fill="#d9a9a9" stroke="#777" stroke-width="0.45"/><line x1="68" y1="32.5" x2="147" y2="32.5" stroke="#555" stroke-width="0.6"/><path d="M103 14 Q105 11 109 11" fill="none" stroke="#888" stroke-width="0.4"/><line x1="133" y1="10.00" x2="141.82" y2="10.00" stroke="#777" stroke-width="0.5"/><line x1="133" y1="11.30" x2="141.42" y2="11.30" stroke="#777" stroke-width="0.5"/><line x1="133" y1="12.60" x2="140.79" y2="12.60" stroke="#777" stroke-width="0.5"/><line x1="133" y1="13.90" x2="138.52" y2="13.90" stroke="#777" stroke-width="0.5"/><path d="M132 12 V20" stroke="#888" stroke-width="0.4"/><line x1="1" y1="41" x2="60" y2="41" stroke="#777" stroke-width="0.45"/><line x1="1" y1="40" x2="20" y2="40" stroke="#555" stroke-width="0.6"/><line x1="71" y1="41" x2="136" y2="41" stroke="#777" stroke-width="0.45"/><line x1="75" y1="40" x2="97" y2="40" stroke="#555" stroke-width="0.6"/><circle cx="73" cy="40.5" r="1.3" fill="none" stroke="#666" stroke-width="0.4"/><circle cx="35" cy="47" r="0.9" fill="none" stroke="#999" stroke-width="0.35"/><circle cx="51" cy="47" r="0.9" fill="none" stroke="#999" stroke-width="0.35"/><circle cx="66" cy="47" r="0.9" fill="none" stroke="#999" stroke-width="0.35"/><circle cx="83" cy="47" r="0.9" fill="none" stroke="#999" stroke-width="0.35"/><circle cx="100" cy="47" r="0.9" fill="none" stroke="#999" stroke-width="0.35"/><circle cx="115" cy="47" r="0.9" fill="none" stroke="#999" stroke-width="0.35"/><circle cx="125" cy="47" r="0.9" fill="none" stroke="#999" stroke-width="0.35"/><rect x="34" y="52" width="78" height="4" fill="none" stroke="#aaa" stroke-width="0.4"/><line x1="89" y1="50.00" x2="105.63" y2="50.00" stroke="#777" stroke-width="0.5"/><line x1="89" y1="51.20" x2="110.42" y2="51.20" stroke="#777" stroke-width="0.5"/><rect x="34" y="58.6" width="92" height="17.7" fill="#efefef" stroke="#666" stroke-width="0.55"/><line x1="34" y1="63" x2="126" y2="63" stroke="#888" stroke-width="0.45"/><path d="M107.6 76.3 V70 H119 V63 H126 V76.3 Z" fill="#d9aeae"/><path d="M77 58.6 V76.3" stroke="#777" stroke-width="0.5"/><path d="M39 67 l2 -2" stroke="#777" stroke-width="0.5"/><path d="M50 67 l2 -2" stroke="#777" stroke-width="0.5"/><path d="M62 67 l2 -2" stroke="#777" stroke-width="0.5"/><path d="M72 67 l2 -2" stroke="#777" stroke-width="0.5"/><path d="M82 67 l2 -2" stroke="#777" stroke-width="0.5"/><path d="M97 67 l2 -2" stroke="#777" stroke-width="0.5"/><path d="M112 67 l2 -2" stroke="#777" stroke-width="0.5"/><rect x="64" y="69" width="3" height="6" fill="none" stroke="#666" stroke-width="0.45"/><rect x="103" y="69" width="3" height="6" fill="none" stroke="#666" stroke-width="0.45"/><line x1="28" y1="76.3" x2="134" y2="76.3" stroke="#444" stroke-width="0.65"/><path d="M130 58.6 V76 M128 66 H132" stroke="#999" stroke-width="0.4"/><circle cx="64" cy="80" r="1.2" fill="none" stroke="#888" stroke-width="0.35"/><circle cx="88" cy="80" r="1.2" fill="none" stroke="#888" stroke-width="0.35"/><circle cx="112" cy="80" r="1.2" fill="none" stroke="#888" stroke-width="0.35"/><path d="M80 76 Q88 84 100 80 M112 82 Q118 80 124 76" fill="none" stroke="#aaa" stroke-width="0.35"/><line x1="33" y1="85" x2="132" y2="85" stroke="#777" stroke-width="0.45"/><line x1="35" y1="84" x2="60" y2="84" stroke="#555" stroke-width="0.6"/><circle cx="35" cy="90.5" r="0.9" fill="none" stroke="#999" stroke-width="0.35"/><circle cx="45" cy="90.5" r="0.9" fill="none" stroke="#999" stroke-width="0.35"/><circle cx="60" cy="90.5" r="0.9" fill="none" stroke="#999" stroke-width="0.35"/><circle cx="77" cy="90.5" r="0.9" fill="none" stroke="#999" stroke-width="0.35"/><circle cx="93" cy="90.5" r="0.9" fill="none" stroke="#999" stroke-width="0.35"/><circle cx="108" cy="90.5" r="0.9" fill="none" stroke="#999" stroke-width="0.35"/><circle cx="125" cy="90.5" r="0.9" fill="none" stroke="#999" stroke-width="0.35"/><path d="M88 95 Q94 94 98 94 M130 96 Q136 92 142 93" fill="none" stroke="#999" stroke-width="0.4"/><line x1="151.0" y1="0" x2="151.0" y2="98" stroke="#d0d0d0" stroke-width="0.5"/><line x1="178.0" y1="0" x2="178.0" y2="98" stroke="#d0d0d0" stroke-width="0.5"/><line x1="153.0" y1="3.2" x2="160.5" y2="3.2" stroke="#666" stroke-width="0.8"/><line x1="151.0" y1="4.8" x2="178.0" y2="4.8" stroke="#ccc" stroke-width="0.4"/><line x1="152.5" y1="6.6" x2="165.5" y2="6.6" stroke="#888" stroke-width="0.55"/><line x1="152.5" y1="8.50" x2="153.8" y2="8.50" stroke="#a4a4a4" stroke-width="0.45"/><line x1="155.5" y1="8.50" x2="175.36" y2="8.50" stroke="#a4a4a4" stroke-width="0.45"/><line x1="152.5" y1="9.65" x2="153.8" y2="9.65" stroke="#a4a4a4" stroke-width="0.45"/><line x1="155.5" y1="9.65" x2="164.86" y2="9.65" stroke="#a4a4a4" stroke-width="0.45"/><line x1="152.5" y1="10.80" x2="153.8" y2="10.80" stroke="#a4a4a4" stroke-width="0.45"/><line x1="155.5" y1="10.80" x2="165.41" y2="10.80" stroke="#a4a4a4" stroke-width="0.45"/><line x1="152.5" y1="11.95" x2="153.8" y2="11.95" stroke="#a4a4a4" stroke-width="0.45"/><line x1="155.5" y1="11.95" x2="164.49" y2="11.95" stroke="#a4a4a4" stroke-width="0.45"/><line x1="152.5" y1="13.10" x2="153.8" y2="13.10" stroke="#a4a4a4" stroke-width="0.45"/><line x1="155.5" y1="13.10" x2="173.30" y2="13.10" stroke="#a4a4a4" stroke-width="0.45"/><line x1="152.5" y1="14.25" x2="153.8" y2="14.25" stroke="#a4a4a4" stroke-width="0.45"/><line x1="155.5" y1="14.25" x2="162.45" y2="14.25" stroke="#a4a4a4" stroke-width="0.45"/><line x1="152.5" y1="17.80" x2="153.8" y2="17.80" stroke="#a4a4a4" stroke-width="0.45"/><line x1="155.5" y1="17.80" x2="174.71" y2="17.80" stroke="#a4a4a4" stroke-width="0.45"/><line x1="152.5" y1="18.95" x2="153.8" y2="18.95" stroke="#a4a4a4" stroke-width="0.45"/><line x1="155.5" y1="18.95" x2="171.06" y2="18.95" stroke="#a4a4a4" stroke-width="0.45"/><line x1="152.5" y1="20.10" x2="153.8" y2="20.10" stroke="#a4a4a4" stroke-width="0.45"/><line x1="155.5" y1="20.10" x2="168.58" y2="20.10" stroke="#a4a4a4" stroke-width="0.45"/><line x1="152.5" y1="21.25" x2="153.8" y2="21.25" stroke="#a4a4a4" stroke-width="0.45"/><line x1="155.5" y1="21.25" x2="167.69" y2="21.25" stroke="#a4a4a4" stroke-width="0.45"/><line x1="152.5" y1="22.40" x2="153.8" y2="22.40" stroke="#a4a4a4" stroke-width="0.45"/><line x1="155.5" y1="22.40" x2="171.58" y2="22.40" stroke="#a4a4a4" stroke-width="0.45"/><line x1="152.5" y1="23.55" x2="153.8" y2="23.55" stroke="#a4a4a4" stroke-width="0.45"/><line x1="155.5" y1="23.55" x2="164.53" y2="23.55" stroke="#a4a4a4" stroke-width="0.45"/><line x1="152.5" y1="27.10" x2="153.8" y2="27.10" stroke="#a4a4a4" stroke-width="0.45"/><line x1="155.5" y1="27.10" x2="164.03" y2="27.10" stroke="#a4a4a4" stroke-width="0.45"/><line x1="152.5" y1="28.25" x2="153.8" y2="28.25" stroke="#a4a4a4" stroke-width="0.45"/><line x1="155.5" y1="28.25" x2="169.29" y2="28.25" stroke="#a4a4a4" stroke-width="0.45"/><line x1="152.5" y1="29.40" x2="153.8" y2="29.40" stroke="#a4a4a4" stroke-width="0.45"/><line x1="155.5" y1="29.40" x2="166.67" y2="29.40" stroke="#a4a4a4" stroke-width="0.45"/><line x1="152.5" y1="30.55" x2="153.8" y2="30.55" stroke="#a4a4a4" stroke-width="0.45"/><line x1="155.5" y1="30.55" x2="176.00" y2="30.55" stroke="#a4a4a4" stroke-width="0.45"/><line x1="152.5" y1="31.70" x2="153.8" y2="31.70" stroke="#a4a4a4" stroke-width="0.45"/><line x1="155.5" y1="31.70" x2="174.70" y2="31.70" stroke="#a4a4a4" stroke-width="0.45"/><line x1="152.5" y1="32.85" x2="153.8" y2="32.85" stroke="#a4a4a4" stroke-width="0.45"/><line x1="155.5" y1="32.85" x2="164.01" y2="32.85" stroke="#a4a4a4" stroke-width="0.45"/><line x1="152.5" y1="34.00" x2="153.8" y2="34.00" stroke="#a4a4a4" stroke-width="0.45"/><line x1="155.5" y1="34.00" x2="164.00" y2="34.00" stroke="#a4a4a4" stroke-width="0.45"/><line x1="152.5" y1="35.15" x2="153.8" y2="35.15" stroke="#a4a4a4" stroke-width="0.45"/><line x1="155.5" y1="35.15" x2="173.71" y2="35.15" stroke="#a4a4a4" stroke-width="0.45"/><line x1="152.5" y1="36.30" x2="153.8" y2="36.30" stroke="#a4a4a4" stroke-width="0.45"/><line x1="155.5" y1="36.30" x2="160.49" y2="36.30" stroke="#a4a4a4" stroke-width="0.45"/><line x1="152.5" y1="39.85" x2="153.8" y2="39.85" stroke="#a4a4a4" stroke-width="0.45"/><line x1="155.5" y1="39.85" x2="166.78" y2="39.85" stroke="#a4a4a4" stroke-width="0.45"/><line x1="152.5" y1="41.00" x2="153.8" y2="41.00" stroke="#a4a4a4" stroke-width="0.45"/><line x1="155.5" y1="41.00" x2="168.89" y2="41.00" stroke="#a4a4a4" stroke-width="0.45"/><line x1="152.5" y1="42.15" x2="153.8" y2="42.15" stroke="#a4a4a4" stroke-width="0.45"/><line x1="155.5" y1="42.15" x2="175.50" y2="42.15" stroke="#a4a4a4" stroke-width="0.45"/><line x1="152.5" y1="43.30" x2="153.8" y2="43.30" stroke="#a4a4a4" stroke-width="0.45"/><line x1="155.5" y1="43.30" x2="168.05" y2="43.30" stroke="#a4a4a4" stroke-width="0.45"/><line x1="152.5" y1="44.45" x2="153.8" y2="44.45" stroke="#a4a4a4" stroke-width="0.45"/><line x1="155.5" y1="44.45" x2="176.39" y2="44.45" stroke="#a4a4a4" stroke-width="0.45"/><line x1="152.5" y1="45.60" x2="153.8" y2="45.60" stroke="#a4a4a4" stroke-width="0.45"/><line x1="155.5" y1="45.60" x2="166.10" y2="45.60" stroke="#a4a4a4" stroke-width="0.45"/><line x1="152.5" y1="46.75" x2="153.8" y2="46.75" stroke="#a4a4a4" stroke-width="0.45"/><line x1="155.5" y1="46.75" x2="166.23" y2="46.75" stroke="#a4a4a4" stroke-width="0.45"/><line x1="152.5" y1="50.30" x2="153.8" y2="50.30" stroke="#a4a4a4" stroke-width="0.45"/><line x1="155.5" y1="50.30" x2="172.89" y2="50.30" stroke="#a4a4a4" stroke-width="0.45"/><line x1="152.5" y1="51.45" x2="153.8" y2="51.45" stroke="#a4a4a4" stroke-width="0.45"/><line x1="155.5" y1="51.45" x2="169.49" y2="51.45" stroke="#a4a4a4" stroke-width="0.45"/><line x1="152.5" y1="52.60" x2="153.8" y2="52.60" stroke="#a4a4a4" stroke-width="0.45"/><line x1="155.5" y1="52.60" x2="173.76" y2="52.60" stroke="#a4a4a4" stroke-width="0.45"/><line x1="152.5" y1="53.75" x2="153.8" y2="53.75" stroke="#a4a4a4" stroke-width="0.45"/><line x1="155.5" y1="53.75" x2="169.71" y2="53.75" stroke="#a4a4a4" stroke-width="0.45"/><line x1="152.5" y1="54.90" x2="153.8" y2="54.90" stroke="#a4a4a4" stroke-width="0.45"/><line x1="155.5" y1="54.90" x2="165.22" y2="54.90" stroke="#a4a4a4" stroke-width="0.45"/><line x1="152.5" y1="56.05" x2="153.8" y2="56.05" stroke="#a4a4a4" stroke-width="0.45"/><line x1="155.5" y1="56.05" x2="161.26" y2="56.05" stroke="#a4a4a4" stroke-width="0.45"/><line x1="152.5" y1="59.60" x2="153.8" y2="59.60" stroke="#a4a4a4" stroke-width="0.45"/><line x1="155.5" y1="59.60" x2="165.83" y2="59.60" stroke="#a4a4a4" stroke-width="0.45"/><line x1="152.5" y1="60.75" x2="153.8" y2="60.75" stroke="#a4a4a4" stroke-width="0.45"/><line x1="155.5" y1="60.75" x2="170.29" y2="60.75" stroke="#a4a4a4" stroke-width="0.45"/><line x1="152.5" y1="61.90" x2="153.8" y2="61.90" stroke="#a4a4a4" stroke-width="0.45"/><line x1="155.5" y1="61.90" x2="164.02" y2="61.90" stroke="#a4a4a4" stroke-width="0.45"/><line x1="152.5" y1="63.05" x2="153.8" y2="63.05" stroke="#a4a4a4" stroke-width="0.45"/><line x1="155.5" y1="63.05" x2="168.42" y2="63.05" stroke="#a4a4a4" stroke-width="0.45"/><line x1="152.5" y1="64.20" x2="153.8" y2="64.20" stroke="#a4a4a4" stroke-width="0.45"/><line x1="155.5" y1="64.20" x2="165.39" y2="64.20" stroke="#a4a4a4" stroke-width="0.45"/><line x1="152.5" y1="65.35" x2="153.8" y2="65.35" stroke="#a4a4a4" stroke-width="0.45"/><line x1="155.5" y1="65.35" x2="165.58" y2="65.35" stroke="#a4a4a4" stroke-width="0.45"/><line x1="152.5" y1="66.50" x2="153.8" y2="66.50" stroke="#a4a4a4" stroke-width="0.45"/><line x1="155.5" y1="66.50" x2="164.50" y2="66.50" stroke="#a4a4a4" stroke-width="0.45"/><line x1="152.5" y1="70.05" x2="153.8" y2="70.05" stroke="#a4a4a4" stroke-width="0.45"/><line x1="155.5" y1="70.05" x2="164.31" y2="70.05" stroke="#a4a4a4" stroke-width="0.45"/><line x1="152.5" y1="71.20" x2="153.8" y2="71.20" stroke="#a4a4a4" stroke-width="0.45"/><line x1="155.5" y1="71.20" x2="164.43" y2="71.20" stroke="#a4a4a4" stroke-width="0.45"/><line x1="152.5" y1="72.35" x2="153.8" y2="72.35" stroke="#a4a4a4" stroke-width="0.45"/><line x1="155.5" y1="72.35" x2="165.18" y2="72.35" stroke="#a4a4a4" stroke-width="0.45"/><line x1="152.5" y1="73.50" x2="153.8" y2="73.50" stroke="#a4a4a4" stroke-width="0.45"/><line x1="155.5" y1="73.50" x2="172.59" y2="73.50" stroke="#a4a4a4" stroke-width="0.45"/><line x1="152.5" y1="74.65" x2="153.8" y2="74.65" stroke="#a4a4a4" stroke-width="0.45"/><line x1="155.5" y1="74.65" x2="165.10" y2="74.65" stroke="#a4a4a4" stroke-width="0.45"/><line x1="152.5" y1="75.80" x2="153.8" y2="75.80" stroke="#a4a4a4" stroke-width="0.45"/><line x1="155.5" y1="75.80" x2="163.27" y2="75.80" stroke="#a4a4a4" stroke-width="0.45"/><line x1="152.5" y1="79.35" x2="153.8" y2="79.35" stroke="#a4a4a4" stroke-width="0.45"/><line x1="155.5" y1="79.35" x2="172.83" y2="79.35" stroke="#a4a4a4" stroke-width="0.45"/><line x1="152.5" y1="80.50" x2="153.8" y2="80.50" stroke="#a4a4a4" stroke-width="0.45"/><line x1="155.5" y1="80.50" x2="171.70" y2="80.50" stroke="#a4a4a4" stroke-width="0.45"/><line x1="152.5" y1="81.65" x2="153.8" y2="81.65" stroke="#a4a4a4" stroke-width="0.45"/><line x1="155.5" y1="81.65" x2="170.62" y2="81.65" stroke="#a4a4a4" stroke-width="0.45"/><line x1="152.5" y1="82.80" x2="153.8" y2="82.80" stroke="#a4a4a4" stroke-width="0.45"/><line x1="155.5" y1="82.80" x2="170.45" y2="82.80" stroke="#a4a4a4" stroke-width="0.45"/><line x1="152.5" y1="83.95" x2="153.8" y2="83.95" stroke="#a4a4a4" stroke-width="0.45"/><line x1="155.5" y1="83.95" x2="172.85" y2="83.95" stroke="#a4a4a4" stroke-width="0.45"/><line x1="152.5" y1="85.10" x2="153.8" y2="85.10" stroke="#a4a4a4" stroke-width="0.45"/><line x1="155.5" y1="85.10" x2="167.53" y2="85.10" stroke="#a4a4a4" stroke-width="0.45"/><line x1="152.5" y1="86.25" x2="153.8" y2="86.25" stroke="#a4a4a4" stroke-width="0.45"/><line x1="155.5" y1="86.25" x2="174.45" y2="86.25" stroke="#a4a4a4" stroke-width="0.45"/><line x1="152.5" y1="87.40" x2="153.8" y2="87.40" stroke="#a4a4a4" stroke-width="0.45"/><line x1="155.5" y1="87.40" x2="172.52" y2="87.40" stroke="#a4a4a4" stroke-width="0.45"/><line x1="152.5" y1="88.55" x2="153.8" y2="88.55" stroke="#a4a4a4" stroke-width="0.45"/><line x1="155.5" y1="88.55" x2="174.66" y2="88.55" stroke="#a4a4a4" stroke-width="0.45"/><line x1="152.5" y1="89.70" x2="153.8" y2="89.70" stroke="#a4a4a4" stroke-width="0.45"/><line x1="155.5" y1="89.70" x2="166.62" y2="89.70" stroke="#a4a4a4" stroke-width="0.45"/><line x1="152.5" y1="93.25" x2="153.8" y2="93.25" stroke="#a4a4a4" stroke-width="0.45"/><line x1="155.5" y1="93.25" x2="170.25" y2="93.25" stroke="#a4a4a4" stroke-width="0.45"/><line x1="152.5" y1="94.40" x2="153.8" y2="94.40" stroke="#a4a4a4" stroke-width="0.45"/><line x1="155.5" y1="94.40" x2="170.29" y2="94.40" stroke="#a4a4a4" stroke-width="0.45"/><line x1="152.5" y1="95.55" x2="153.8" y2="95.55" stroke="#a4a4a4" stroke-width="0.45"/><line x1="155.5" y1="95.55" x2="173.04" y2="95.55" stroke="#a4a4a4" stroke-width="0.45"/><line x1="152.5" y1="96.70" x2="153.8" y2="96.70" stroke="#a4a4a4" stroke-width="0.45"/><line x1="155.5" y1="96.70" x2="171.03" y2="96.70" stroke="#a4a4a4" stroke-width="0.45"/></g></svg></div></div><div class="a" style="left:1035.00px;top:409.00px;font-size:13px;line-height:16px;font-weight:bold;color:#444547;">A3.01</div><div class="a" style="left:1035.00px;top:427.59px;font-size:11px;line-height:14px;font-weight:normal;color:#6b6c6e;">Building 1 Elevations</div><div class="card" style="left:1218px;top:307px;"><div class="img" style="height:96px;"><svg width="178" height="96" viewBox="0 0 178 96" style="position:absolute;left:0;top:0"><g transform="translate(-1 -2.5)"><path d="M97.4 26.6 H89.2 V48.4 H97.5" fill="none" stroke="#3a3a3a" stroke-width="1.1"/><path d="M101.5 26.6 H105 M118 26.6 H137.6 M102 47.7 H121.3 M102 47.7 V53 M121.3 26.6 V60.6 H137.6" fill="none" stroke="#3a3a3a" stroke-width="1.1"/><path d="M105 27 H118" stroke="#999" stroke-width="0.5"/><path d="M108 37.5 l1.5 -2.2 l1.5 2.2 l-1.5 2.2 z M106 37.5 H113 M109.5 34 V41" fill="none" stroke="#555" stroke-width="0.5"/><path d="M123.5 50 Q126 40 132 34" fill="none" stroke="#888" stroke-width="0.4"/><path d="M115 34 l1 1 M115 40 l1 1 M115 43 l1 1" stroke="#666" stroke-width="0.5"/><line x1="99" y1="36.50" x2="103.70" y2="36.50" stroke="#777" stroke-width="0.5"/><line x1="99" y1="37.70" x2="102.37" y2="37.70" stroke="#777" stroke-width="0.5"/><line x1="132" y1="37.50" x2="135.58" y2="37.50" stroke="#777" stroke-width="0.5"/><line x1="132" y1="38.70" x2="135.90" y2="38.70" stroke="#777" stroke-width="0.5"/><path d="M132 44 l1.5 -1 l1.5 1 l-1.5 1 z" fill="none" stroke="#555" stroke-width="0.45"/><rect x="139.5" y="29" width="9" height="5" rx="2.5" fill="none" stroke="#777" stroke-width="0.4"/><path d="M148.5 33 l1.5 2" stroke="#777" stroke-width="0.4"/><line x1="91" y1="22.00" x2="94.94" y2="22.00" stroke="#888" stroke-width="0.5"/><path d="M103 24 H117 Q121 20 124 17" fill="none" stroke="#888" stroke-width="0.4"/><circle cx="128.5" cy="21.5" r="1.8" fill="none" stroke="#888" stroke-width="0.4"/><line x1="113" y1="61" x2="121" y2="61" stroke="#999" stroke-width="0.4"/><line x1="91" y1="51.00" x2="95.42" y2="51.00" stroke="#888" stroke-width="0.5"/><line x1="91" y1="52.30" x2="94.34" y2="52.30" stroke="#888" stroke-width="0.5"/><line x1="112" y1="49.50" x2="114.91" y2="49.50" stroke="#888" stroke-width="0.5"/><line x1="112" y1="50.80" x2="115.37" y2="50.80" stroke="#888" stroke-width="0.5"/><path d="M49.7 98 V58 Q49.7 54.5 53 54.5 H90.5 Q94 54.5 94 58 V72" fill="none" stroke="#999" stroke-width="0.4" stroke-dasharray="1 1"/><path d="M68.8 98 V66 H72 M78.3 98 V60 M63.5 74.5 H68.8 M78.3 74.5 H83 M78.3 88.5 H83" fill="none" stroke="#3a3a3a" stroke-width="1.1"/><path d="M73 66 V98 M75 70 V95" stroke="#999" stroke-width="0.4" stroke-dasharray="1 1"/><path d="M55 74.5 H62 M84 70 Q88 70 92 69" fill="none" stroke="#999" stroke-width="0.4"/><line x1="69" y1="60.00" x2="73.38" y2="60.00" stroke="#888" stroke-width="0.5"/><line x1="69" y1="61.30" x2="71.87" y2="61.30" stroke="#888" stroke-width="0.5"/><line x1="94" y1="66.5" x2="140" y2="66.5" stroke="#777" stroke-width="0.45"/><line x1="96" y1="65.8" x2="128" y2="65.8" stroke="#555" stroke-width="0.6"/><circle cx="95.5" cy="66" r="0.8" fill="none" stroke="#555" stroke-width="0.4"/><path d="M114.5 98 V69 Q114.5 65.5 118 69 H137 Q140.5 69 140.5 72.5 V98" fill="none" stroke="#aaa" stroke-width="0.4" stroke-dasharray="1 1"/><path d="M117 98 V74.3 H137.6" fill="none" stroke="#3a3a3a" stroke-width="1.2"/><line x1="136.8" y1="84" x2="136.8" y2="94" stroke="#3a3a3a" stroke-width="1.6"/><line x1="123" y1="83.00" x2="127.15" y2="83.00" stroke="#888" stroke-width="0.5"/><line x1="123" y1="84.20" x2="126.38" y2="84.20" stroke="#888" stroke-width="0.5"/><path d="M106 74.3 H112 M131 81 H140" stroke="#999" stroke-width="0.4"/><line x1="151.0" y1="0" x2="151.0" y2="98" stroke="#d0d0d0" stroke-width="0.5"/><line x1="178.0" y1="0" x2="178.0" y2="98" stroke="#d0d0d0" stroke-width="0.5"/><line x1="153.0" y1="3.2" x2="160.5" y2="3.2" stroke="#666" stroke-width="0.8"/><line x1="151.0" y1="4.8" x2="178.0" y2="4.8" stroke="#ccc" stroke-width="0.4"/><line x1="152.5" y1="6.6" x2="165.5" y2="6.6" stroke="#888" stroke-width="0.55"/><line x1="152.5" y1="8.50" x2="153.8" y2="8.50" stroke="#a4a4a4" stroke-width="0.45"/><line x1="155.5" y1="8.50" x2="174.51" y2="8.50" stroke="#a4a4a4" stroke-width="0.45"/><line x1="152.5" y1="9.65" x2="153.8" y2="9.65" stroke="#a4a4a4" stroke-width="0.45"/><line x1="155.5" y1="9.65" x2="171.50" y2="9.65" stroke="#a4a4a4" stroke-width="0.45"/><line x1="152.5" y1="10.80" x2="153.8" y2="10.80" stroke="#a4a4a4" stroke-width="0.45"/><line x1="155.5" y1="10.80" x2="174.29" y2="10.80" stroke="#a4a4a4" stroke-width="0.45"/><line x1="152.5" y1="11.95" x2="153.8" y2="11.95" stroke="#a4a4a4" stroke-width="0.45"/><line x1="155.5" y1="11.95" x2="169.96" y2="11.95" stroke="#a4a4a4" stroke-width="0.45"/><line x1="152.5" y1="13.10" x2="153.8" y2="13.10" stroke="#a4a4a4" stroke-width="0.45"/><line x1="155.5" y1="13.10" x2="174.83" y2="13.10" stroke="#a4a4a4" stroke-width="0.45"/><line x1="152.5" y1="14.25" x2="153.8" y2="14.25" stroke="#a4a4a4" stroke-width="0.45"/><line x1="155.5" y1="14.25" x2="172.30" y2="14.25" stroke="#a4a4a4" stroke-width="0.45"/><line x1="152.5" y1="15.40" x2="153.8" y2="15.40" stroke="#a4a4a4" stroke-width="0.45"/><line x1="155.5" y1="15.40" x2="165.16" y2="15.40" stroke="#a4a4a4" stroke-width="0.45"/><line x1="152.5" y1="18.95" x2="153.8" y2="18.95" stroke="#a4a4a4" stroke-width="0.45"/><line x1="155.5" y1="18.95" x2="171.46" y2="18.95" stroke="#a4a4a4" stroke-width="0.45"/><line x1="152.5" y1="20.10" x2="153.8" y2="20.10" stroke="#a4a4a4" stroke-width="0.45"/><line x1="155.5" y1="20.10" x2="175.98" y2="20.10" stroke="#a4a4a4" stroke-width="0.45"/><line x1="152.5" y1="21.25" x2="153.8" y2="21.25" stroke="#a4a4a4" stroke-width="0.45"/><line x1="155.5" y1="21.25" x2="174.12" y2="21.25" stroke="#a4a4a4" stroke-width="0.45"/><line x1="152.5" y1="22.40" x2="153.8" y2="22.40" stroke="#a4a4a4" stroke-width="0.45"/><line x1="155.5" y1="22.40" x2="170.33" y2="22.40" stroke="#a4a4a4" stroke-width="0.45"/><line x1="152.5" y1="23.55" x2="153.8" y2="23.55" stroke="#a4a4a4" stroke-width="0.45"/><line x1="155.5" y1="23.55" x2="166.76" y2="23.55" stroke="#a4a4a4" stroke-width="0.45"/><line x1="152.5" y1="24.70" x2="153.8" y2="24.70" stroke="#a4a4a4" stroke-width="0.45"/><line x1="155.5" y1="24.70" x2="175.58" y2="24.70" stroke="#a4a4a4" stroke-width="0.45"/><line x1="152.5" y1="25.85" x2="153.8" y2="25.85" stroke="#a4a4a4" stroke-width="0.45"/><line x1="155.5" y1="25.85" x2="167.49" y2="25.85" stroke="#a4a4a4" stroke-width="0.45"/><line x1="152.5" y1="29.40" x2="153.8" y2="29.40" stroke="#a4a4a4" stroke-width="0.45"/><line x1="155.5" y1="29.40" x2="175.75" y2="29.40" stroke="#a4a4a4" stroke-width="0.45"/><line x1="152.5" y1="30.55" x2="153.8" y2="30.55" stroke="#a4a4a4" stroke-width="0.45"/><line x1="155.5" y1="30.55" x2="168.16" y2="30.55" stroke="#a4a4a4" stroke-width="0.45"/><line x1="152.5" y1="31.70" x2="153.8" y2="31.70" stroke="#a4a4a4" stroke-width="0.45"/><line x1="155.5" y1="31.70" x2="172.93" y2="31.70" stroke="#a4a4a4" stroke-width="0.45"/><line x1="152.5" y1="32.85" x2="153.8" y2="32.85" stroke="#a4a4a4" stroke-width="0.45"/><line x1="155.5" y1="32.85" x2="172.24" y2="32.85" stroke="#a4a4a4" stroke-width="0.45"/><line x1="152.5" y1="34.00" x2="153.8" y2="34.00" stroke="#a4a4a4" stroke-width="0.45"/><line x1="155.5" y1="34.00" x2="165.91" y2="34.00" stroke="#a4a4a4" stroke-width="0.45"/><line x1="152.5" y1="35.15" x2="153.8" y2="35.15" stroke="#a4a4a4" stroke-width="0.45"/><line x1="155.5" y1="35.15" x2="174.42" y2="35.15" stroke="#a4a4a4" stroke-width="0.45"/><line x1="152.5" y1="36.30" x2="153.8" y2="36.30" stroke="#a4a4a4" stroke-width="0.45"/><line x1="155.5" y1="36.30" x2="174.22" y2="36.30" stroke="#a4a4a4" stroke-width="0.45"/><line x1="152.5" y1="37.45" x2="153.8" y2="37.45" stroke="#a4a4a4" stroke-width="0.45"/><line x1="155.5" y1="37.45" x2="175.62" y2="37.45" stroke="#a4a4a4" stroke-width="0.45"/><line x1="152.5" y1="38.60" x2="153.8" y2="38.60" stroke="#a4a4a4" stroke-width="0.45"/><line x1="155.5" y1="38.60" x2="175.93" y2="38.60" stroke="#a4a4a4" stroke-width="0.45"/><line x1="152.5" y1="39.75" x2="153.8" y2="39.75" stroke="#a4a4a4" stroke-width="0.45"/><line x1="155.5" y1="39.75" x2="166.53" y2="39.75" stroke="#a4a4a4" stroke-width="0.45"/><line x1="152.5" y1="43.30" x2="153.8" y2="43.30" stroke="#a4a4a4" stroke-width="0.45"/><line x1="155.5" y1="43.30" x2="173.39" y2="43.30" stroke="#a4a4a4" stroke-width="0.45"/><line x1="152.5" y1="44.45" x2="153.8" y2="44.45" stroke="#a4a4a4" stroke-width="0.45"/><line x1="155.5" y1="44.45" x2="171.64" y2="44.45" stroke="#a4a4a4" stroke-width="0.45"/><line x1="152.5" y1="45.60" x2="153.8" y2="45.60" stroke="#a4a4a4" stroke-width="0.45"/><line x1="155.5" y1="45.60" x2="174.24" y2="45.60" stroke="#a4a4a4" stroke-width="0.45"/><line x1="152.5" y1="46.75" x2="153.8" y2="46.75" stroke="#a4a4a4" stroke-width="0.45"/><line x1="155.5" y1="46.75" x2="170.20" y2="46.75" stroke="#a4a4a4" stroke-width="0.45"/><line x1="152.5" y1="47.90" x2="153.8" y2="47.90" stroke="#a4a4a4" stroke-width="0.45"/><line x1="155.5" y1="47.90" x2="171.17" y2="47.90" stroke="#a4a4a4" stroke-width="0.45"/><line x1="152.5" y1="49.05" x2="153.8" y2="49.05" stroke="#a4a4a4" stroke-width="0.45"/><line x1="155.5" y1="49.05" x2="176.03" y2="49.05" stroke="#a4a4a4" stroke-width="0.45"/><line x1="152.5" y1="50.20" x2="153.8" y2="50.20" stroke="#a4a4a4" stroke-width="0.45"/><line x1="155.5" y1="50.20" x2="173.79" y2="50.20" stroke="#a4a4a4" stroke-width="0.45"/><line x1="152.5" y1="51.35" x2="153.8" y2="51.35" stroke="#a4a4a4" stroke-width="0.45"/><line x1="155.5" y1="51.35" x2="175.61" y2="51.35" stroke="#a4a4a4" stroke-width="0.45"/><line x1="152.5" y1="52.50" x2="153.8" y2="52.50" stroke="#a4a4a4" stroke-width="0.45"/><line x1="155.5" y1="52.50" x2="172.58" y2="52.50" stroke="#a4a4a4" stroke-width="0.45"/><line x1="152.5" y1="53.65" x2="153.8" y2="53.65" stroke="#a4a4a4" stroke-width="0.45"/><line x1="155.5" y1="53.65" x2="160.49" y2="53.65" stroke="#a4a4a4" stroke-width="0.45"/><line x1="152.5" y1="57.20" x2="153.8" y2="57.20" stroke="#a4a4a4" stroke-width="0.45"/><line x1="155.5" y1="57.20" x2="168.15" y2="57.20" stroke="#a4a4a4" stroke-width="0.45"/><line x1="152.5" y1="58.35" x2="153.8" y2="58.35" stroke="#a4a4a4" stroke-width="0.45"/><line x1="155.5" y1="58.35" x2="172.68" y2="58.35" stroke="#a4a4a4" stroke-width="0.45"/><line x1="152.5" y1="59.50" x2="153.8" y2="59.50" stroke="#a4a4a4" stroke-width="0.45"/><line x1="155.5" y1="59.50" x2="170.85" y2="59.50" stroke="#a4a4a4" stroke-width="0.45"/><line x1="152.5" y1="60.65" x2="153.8" y2="60.65" stroke="#a4a4a4" stroke-width="0.45"/><line x1="155.5" y1="60.65" x2="175.48" y2="60.65" stroke="#a4a4a4" stroke-width="0.45"/><line x1="152.5" y1="61.80" x2="153.8" y2="61.80" stroke="#a4a4a4" stroke-width="0.45"/><line x1="155.5" y1="61.80" x2="170.68" y2="61.80" stroke="#a4a4a4" stroke-width="0.45"/><line x1="152.5" y1="62.95" x2="153.8" y2="62.95" stroke="#a4a4a4" stroke-width="0.45"/><line x1="155.5" y1="62.95" x2="174.58" y2="62.95" stroke="#a4a4a4" stroke-width="0.45"/><line x1="152.5" y1="64.10" x2="153.8" y2="64.10" stroke="#a4a4a4" stroke-width="0.45"/><line x1="155.5" y1="64.10" x2="168.58" y2="64.10" stroke="#a4a4a4" stroke-width="0.45"/><line x1="152.5" y1="65.25" x2="153.8" y2="65.25" stroke="#a4a4a4" stroke-width="0.45"/><line x1="155.5" y1="65.25" x2="168.14" y2="65.25" stroke="#a4a4a4" stroke-width="0.45"/><line x1="152.5" y1="66.40" x2="153.8" y2="66.40" stroke="#a4a4a4" stroke-width="0.45"/><line x1="155.5" y1="66.40" x2="166.30" y2="66.40" stroke="#a4a4a4" stroke-width="0.45"/><line x1="152.5" y1="69.95" x2="153.8" y2="69.95" stroke="#a4a4a4" stroke-width="0.45"/><line x1="155.5" y1="69.95" x2="170.62" y2="69.95" stroke="#a4a4a4" stroke-width="0.45"/><line x1="152.5" y1="71.10" x2="153.8" y2="71.10" stroke="#a4a4a4" stroke-width="0.45"/><line x1="155.5" y1="71.10" x2="166.15" y2="71.10" stroke="#a4a4a4" stroke-width="0.45"/><line x1="152.5" y1="72.25" x2="153.8" y2="72.25" stroke="#a4a4a4" stroke-width="0.45"/><line x1="155.5" y1="72.25" x2="171.43" y2="72.25" stroke="#a4a4a4" stroke-width="0.45"/><line x1="152.5" y1="73.40" x2="153.8" y2="73.40" stroke="#a4a4a4" stroke-width="0.45"/><line x1="155.5" y1="73.40" x2="165.91" y2="73.40" stroke="#a4a4a4" stroke-width="0.45"/><line x1="152.5" y1="74.55" x2="153.8" y2="74.55" stroke="#a4a4a4" stroke-width="0.45"/><line x1="155.5" y1="74.55" x2="173.37" y2="74.55" stroke="#a4a4a4" stroke-width="0.45"/><line x1="152.5" y1="75.70" x2="153.8" y2="75.70" stroke="#a4a4a4" stroke-width="0.45"/><line x1="155.5" y1="75.70" x2="162.90" y2="75.70" stroke="#a4a4a4" stroke-width="0.45"/><line x1="152.5" y1="79.25" x2="153.8" y2="79.25" stroke="#a4a4a4" stroke-width="0.45"/><line x1="155.5" y1="79.25" x2="170.07" y2="79.25" stroke="#a4a4a4" stroke-width="0.45"/><line x1="152.5" y1="80.40" x2="153.8" y2="80.40" stroke="#a4a4a4" stroke-width="0.45"/><line x1="155.5" y1="80.40" x2="165.67" y2="80.40" stroke="#a4a4a4" stroke-width="0.45"/><line x1="152.5" y1="81.55" x2="153.8" y2="81.55" stroke="#a4a4a4" stroke-width="0.45"/><line x1="155.5" y1="81.55" x2="163.92" y2="81.55" stroke="#a4a4a4" stroke-width="0.45"/><line x1="152.5" y1="82.70" x2="153.8" y2="82.70" stroke="#a4a4a4" stroke-width="0.45"/><line x1="155.5" y1="82.70" x2="172.55" y2="82.70" stroke="#a4a4a4" stroke-width="0.45"/><line x1="152.5" y1="83.85" x2="153.8" y2="83.85" stroke="#a4a4a4" stroke-width="0.45"/><line x1="155.5" y1="83.85" x2="164.49" y2="83.85" stroke="#a4a4a4" stroke-width="0.45"/><line x1="152.5" y1="85.00" x2="153.8" y2="85.00" stroke="#a4a4a4" stroke-width="0.45"/><line x1="155.5" y1="85.00" x2="170.93" y2="85.00" stroke="#a4a4a4" stroke-width="0.45"/><line x1="152.5" y1="86.15" x2="153.8" y2="86.15" stroke="#a4a4a4" stroke-width="0.45"/><line x1="155.5" y1="86.15" x2="167.49" y2="86.15" stroke="#a4a4a4" stroke-width="0.45"/><line x1="152.5" y1="87.30" x2="153.8" y2="87.30" stroke="#a4a4a4" stroke-width="0.45"/><line x1="155.5" y1="87.30" x2="172.04" y2="87.30" stroke="#a4a4a4" stroke-width="0.45"/><line x1="152.5" y1="88.45" x2="153.8" y2="88.45" stroke="#a4a4a4" stroke-width="0.45"/><line x1="155.5" y1="88.45" x2="171.96" y2="88.45" stroke="#a4a4a4" stroke-width="0.45"/><line x1="152.5" y1="89.60" x2="153.8" y2="89.60" stroke="#a4a4a4" stroke-width="0.45"/><line x1="155.5" y1="89.60" x2="162.42" y2="89.60" stroke="#a4a4a4" stroke-width="0.45"/><line x1="152.5" y1="93.15" x2="153.8" y2="93.15" stroke="#a4a4a4" stroke-width="0.45"/><line x1="155.5" y1="93.15" x2="164.58" y2="93.15" stroke="#a4a4a4" stroke-width="0.45"/><line x1="152.5" y1="94.30" x2="153.8" y2="94.30" stroke="#a4a4a4" stroke-width="0.45"/><line x1="155.5" y1="94.30" x2="173.85" y2="94.30" stroke="#a4a4a4" stroke-width="0.45"/><line x1="152.5" y1="95.45" x2="153.8" y2="95.45" stroke="#a4a4a4" stroke-width="0.45"/><line x1="155.5" y1="95.45" x2="175.45" y2="95.45" stroke="#a4a4a4" stroke-width="0.45"/><line x1="152.5" y1="96.60" x2="153.8" y2="96.60" stroke="#a4a4a4" stroke-width="0.45"/><line x1="155.5" y1="96.60" x2="169.90" y2="96.60" stroke="#a4a4a4" stroke-width="0.45"/></g></svg></div></div><div class="a" style="left:1227.00px;top:409.00px;font-size:13px;line-height:16px;font-weight:bold;color:#444547;">A5.01-1</div><div class="a" style="left:1227.00px;top:427.59px;font-size:11px;line-height:14px;font-weight:normal;color:#6b6c6e;">Building 1 Enlarged Plans</div><svg class="a" style="left:258px;top:459px;" width="181" height="142" viewBox="0 0 181 142"><rect x="1" y="1.6" width="178.5" height="139" fill="none" stroke="#cdcdcf" stroke-width="2" stroke-dasharray="4 2"/></svg><div class="a" style="left:315.00px;top:521.67px;font-size:12.5px;line-height:16px;font-weight:bold;color:#c9cacc;">+ New plan</div><div class="a" style="left:236px;top:694px;width:1218px;height:2px;background:#dcdddf"></div><div class="a" style="left:246.00px;top:706.87px;font-size:12.5px;line-height:16px;font-weight:normal;color:#4a4b4d;">4 plans</div><div class="a" style="left:796px;top:311.8px;width:21px;height:20.6px;border-radius:11px;background:#5b8bef"></div><div class="a" style="left:796.00px;top:316.10px;font-size:13px;line-height:16px;font-weight:normal;color:#fff;"><div style="width:21px;text-align:center">16</div></div><div class="a" style="left:988.7px;top:311.8px;width:20.5px;height:20.4px;border-radius:11px;background:#5b8bef"></div><div class="a" style="left:988.50px;top:316.10px;font-size:13px;line-height:16px;font-weight:normal;color:#fff;"><div style="width:21px;text-align:center">1</div></div><div class="a" style="left:837px;top:311.5px;width:18px;height:17px;background:#fdfdfd;border:1.5px solid #6d94f1;border-radius:3px"></div><div class="a" style="left:858px;top:454px;width:133px;height:40px;background:#1b1c1d;border-radius:3px"></div><svg class="a" style="left:919px;top:449px;" width="11" height="6" viewBox="0 0 11 6"><path d="M0 5.5 L5.5 0.3 L11 5.5 Z" fill="#1b1c1d"/></svg><div class="a" style="left:858px;top:457.6px;width:133px;text-align:center;font-size:11.8px;line-height:16.8px;color:#f2f2f2">A2.03-1<br>Building 1 Ceiling Plan</div><svg class="a" style="left:920px;top:429px;" width="20" height="21" viewBox="0 0 20 21"><path d="M5.5 13 L2.2 9.2 Q1.2 7.8 2.4 7.1 Q3.6 6.5 4.8 7.9 L6.6 10 V3.6 Q6.6 2.2 7.9 2.2 Q9.2 2.2 9.2 3.6 V8.6 V2 Q9.2 0.7 10.5 0.7 Q11.8 0.7 11.8 2 V8.6 V2.8 Q11.8 1.5 13.1 1.5 Q14.4 1.5 14.4 2.8 V9 V5 Q14.4 3.8 15.6 3.8 Q16.9 3.8 16.9 5 V12.5 Q16.9 16.5 14.5 19.5 H8.2 Q7 17.5 5.5 13 Z" fill="#fff" stroke="#1a1a1a" stroke-width="1.05"/><path d="M10 13.5 V17 M11.7 13.5 V17 M13.4 13.5 V17" stroke="#1a1a1a" stroke-width="0.9"/></svg><div class="a" style="left:250px;top:700px;width:950px;height:40px;background:radial-gradient(ellipse 50% 100% at 50% 100%, rgba(0,0,0,0.10), rgba(0,0,0,0) 100%)"></div></div></body></html>
